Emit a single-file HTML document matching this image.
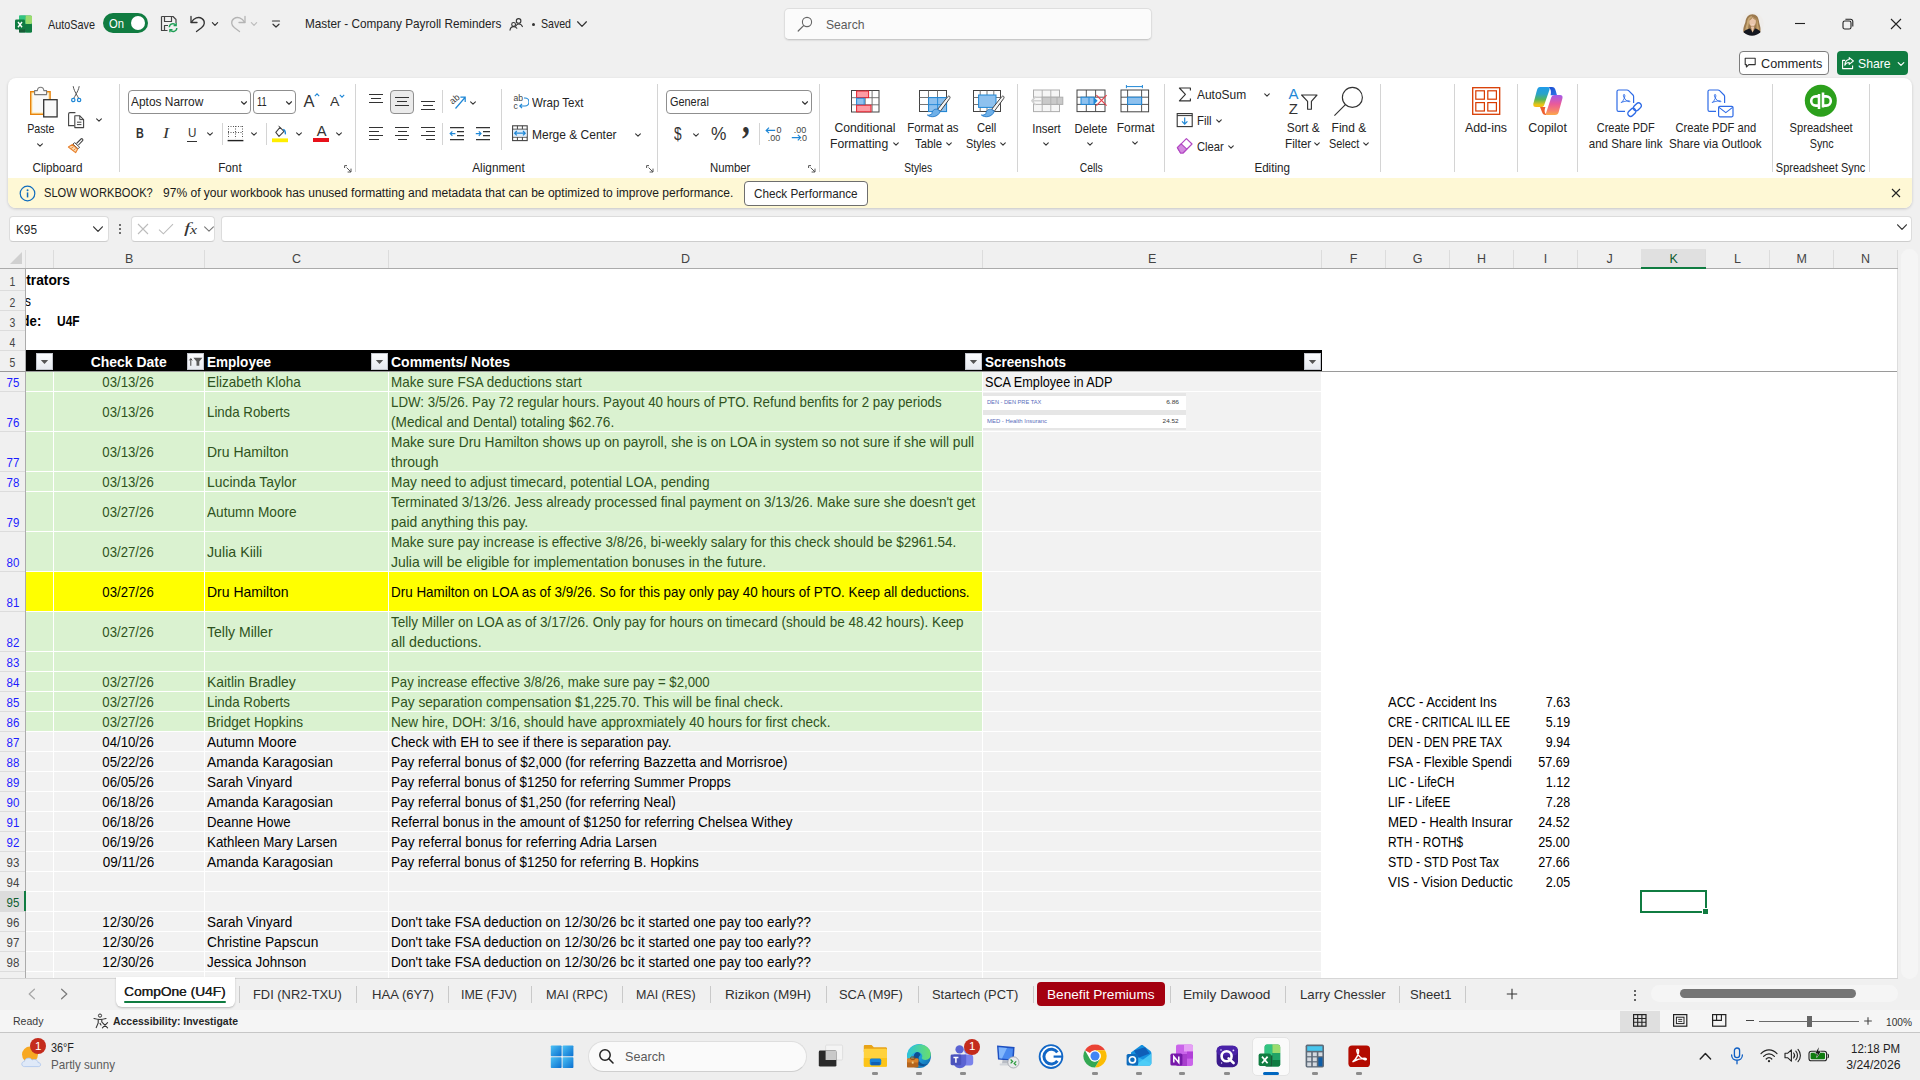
<!DOCTYPE html>
<html><head><meta charset="utf-8"><title>Master - Company Payroll Reminders - Excel</title>
<style>
html,body{margin:0;padding:0;}
body{width:1920px;height:1080px;overflow:hidden;position:relative;background:#f0f0f0;font-family:"Liberation Sans",sans-serif;}
body div,body svg,body span.t{position:absolute;}
span.t{white-space:pre;display:block;}
div{box-sizing:border-box;}
</style></head><body>

<div style="left:0px;top:248px;width:1898px;height:730px;background:#ffffff;"></div>
<div style="left:0px;top:248px;width:1898px;height:20px;background:#f0f0f0;"></div>
<svg style="left:9px;top:251px;" width="14" height="14" viewBox="0 0 14 14"><path d="M13 1 L13 13 L1 13 Z" fill="#d0d0d0"/></svg>
<div style="left:53px;top:250px;width:1px;height:18px;background:#dcdcdc;"></div>
<span class="t" style="left:124.93px;top:251.00px;height:16px;line-height:16px;font-size:12.5px;color:#444;">B</span>
<div style="left:204px;top:250px;width:1px;height:18px;background:#dcdcdc;"></div>
<span class="t" style="left:292.09px;top:251.00px;height:16px;line-height:16px;font-size:12.5px;color:#444;">C</span>
<div style="left:388px;top:250px;width:1px;height:18px;background:#dcdcdc;"></div>
<span class="t" style="left:681.09px;top:251.00px;height:16px;line-height:16px;font-size:12.5px;color:#444;">D</span>
<div style="left:982px;top:250px;width:1px;height:18px;background:#dcdcdc;"></div>
<span class="t" style="left:1147.93px;top:251.00px;height:16px;line-height:16px;font-size:12.5px;color:#444;">E</span>
<div style="left:1321px;top:250px;width:1px;height:18px;background:#dcdcdc;"></div>
<span class="t" style="left:1349.78px;top:251.00px;height:16px;line-height:16px;font-size:12.5px;color:#444;">F</span>
<div style="left:1385px;top:250px;width:1px;height:18px;background:#dcdcdc;"></div>
<span class="t" style="left:1412.74px;top:251.00px;height:16px;line-height:16px;font-size:12.5px;color:#444;">G</span>
<div style="left:1449px;top:250px;width:1px;height:18px;background:#dcdcdc;"></div>
<span class="t" style="left:1477.09px;top:251.00px;height:16px;line-height:16px;font-size:12.5px;color:#444;">H</span>
<div style="left:1513px;top:250px;width:1px;height:18px;background:#dcdcdc;"></div>
<span class="t" style="left:1543.86px;top:251.00px;height:16px;line-height:16px;font-size:12.5px;color:#444;">I</span>
<div style="left:1577px;top:250px;width:1px;height:18px;background:#dcdcdc;"></div>
<span class="t" style="left:1606.47px;top:251.00px;height:16px;line-height:16px;font-size:12.5px;color:#444;">J</span>
<div style="left:1641px;top:250px;width:1px;height:18px;background:#dcdcdc;"></div>
<div style="left:1641px;top:249px;width:65px;height:20px;background:#e0e0e0;border-bottom:2px solid #107c41;"></div>
<span class="t" style="left:1669.43px;top:251.00px;height:16px;line-height:16px;font-size:12.5px;color:#0e5c2f;">K</span>
<div style="left:1705px;top:250px;width:1px;height:18px;background:#dcdcdc;"></div>
<span class="t" style="left:1734.12px;top:251.00px;height:16px;line-height:16px;font-size:12.5px;color:#444;">L</span>
<div style="left:1769px;top:250px;width:1px;height:18px;background:#dcdcdc;"></div>
<span class="t" style="left:1796.39px;top:251.00px;height:16px;line-height:16px;font-size:12.5px;color:#444;">M</span>
<div style="left:1833px;top:250px;width:1px;height:18px;background:#dcdcdc;"></div>
<span class="t" style="left:1861.09px;top:251.00px;height:16px;line-height:16px;font-size:12.5px;color:#444;">N</span>
<div style="left:1897px;top:250px;width:1px;height:18px;background:#dcdcdc;"></div>
<div style="left:25px;top:250px;width:1px;height:18px;background:#dcdcdc;"></div>
<div style="left:0px;top:268px;width:1898px;height:1px;background:#ababab;"></div>
<div style="left:1641px;top:267px;width:65px;height:2px;background:#107c41;"></div>
<div style="left:0px;top:269px;width:25px;height:709px;background:#f0f0f0;"></div>
<div style="left:25px;top:269px;width:1px;height:709px;background:#ababab;"></div>
<span class="t" style="left:9.30px;top:273.70px;height:16px;line-height:16px;font-size:12.6px;color:#444;transform:scaleX(0.8277);transform-origin:50% 50%;">1</span>
<div style="left:0px;top:290px;width:25px;height:1px;background:#dcdcdc;"></div>
<span class="t" style="left:9.30px;top:294.60px;height:16px;line-height:16px;font-size:12.6px;color:#444;transform:scaleX(0.8277);transform-origin:50% 50%;">2</span>
<div style="left:0px;top:310px;width:25px;height:1px;background:#dcdcdc;"></div>
<span class="t" style="left:9.30px;top:314.60px;height:16px;line-height:16px;font-size:12.6px;color:#444;transform:scaleX(0.8277);transform-origin:50% 50%;">3</span>
<div style="left:0px;top:330px;width:25px;height:1px;background:#dcdcdc;"></div>
<span class="t" style="left:9.30px;top:334.60px;height:16px;line-height:16px;font-size:12.6px;color:#444;transform:scaleX(0.8277);transform-origin:50% 50%;">4</span>
<div style="left:0px;top:350px;width:25px;height:1px;background:#dcdcdc;"></div>
<span class="t" style="left:9.30px;top:355.00px;height:16px;line-height:16px;font-size:12.6px;color:#444;transform:scaleX(0.8277);transform-origin:50% 50%;">5</span>
<div style="left:0px;top:371px;width:25px;height:1px;background:#dcdcdc;"></div>
<span class="t" style="left:5.79px;top:375.20px;height:16px;line-height:16px;font-size:12.6px;color:#1c1cff;transform:scaleX(0.9133);transform-origin:50% 50%;">75</span>
<div style="left:0px;top:391px;width:25px;height:1px;background:#dcdcdc;"></div>
<span class="t" style="left:5.79px;top:415.20px;height:16px;line-height:16px;font-size:12.6px;color:#1c1cff;transform:scaleX(0.9133);transform-origin:50% 50%;">76</span>
<div style="left:0px;top:431px;width:25px;height:1px;background:#dcdcdc;"></div>
<span class="t" style="left:5.79px;top:455.20px;height:16px;line-height:16px;font-size:12.6px;color:#1c1cff;transform:scaleX(0.9133);transform-origin:50% 50%;">77</span>
<div style="left:0px;top:471px;width:25px;height:1px;background:#dcdcdc;"></div>
<span class="t" style="left:5.79px;top:475.20px;height:16px;line-height:16px;font-size:12.6px;color:#1c1cff;transform:scaleX(0.9133);transform-origin:50% 50%;">78</span>
<div style="left:0px;top:491px;width:25px;height:1px;background:#dcdcdc;"></div>
<span class="t" style="left:5.79px;top:515.20px;height:16px;line-height:16px;font-size:12.6px;color:#1c1cff;transform:scaleX(0.9133);transform-origin:50% 50%;">79</span>
<div style="left:0px;top:531px;width:25px;height:1px;background:#dcdcdc;"></div>
<span class="t" style="left:5.79px;top:555.20px;height:16px;line-height:16px;font-size:12.6px;color:#1c1cff;transform:scaleX(0.9133);transform-origin:50% 50%;">80</span>
<div style="left:0px;top:571px;width:25px;height:1px;background:#dcdcdc;"></div>
<span class="t" style="left:5.79px;top:595.20px;height:16px;line-height:16px;font-size:12.6px;color:#1c1cff;transform:scaleX(0.9133);transform-origin:50% 50%;">81</span>
<div style="left:0px;top:611px;width:25px;height:1px;background:#dcdcdc;"></div>
<span class="t" style="left:5.79px;top:635.20px;height:16px;line-height:16px;font-size:12.6px;color:#1c1cff;transform:scaleX(0.9133);transform-origin:50% 50%;">82</span>
<div style="left:0px;top:651px;width:25px;height:1px;background:#dcdcdc;"></div>
<span class="t" style="left:5.79px;top:655.20px;height:16px;line-height:16px;font-size:12.6px;color:#1c1cff;transform:scaleX(0.9133);transform-origin:50% 50%;">83</span>
<div style="left:0px;top:671px;width:25px;height:1px;background:#dcdcdc;"></div>
<span class="t" style="left:5.79px;top:675.20px;height:16px;line-height:16px;font-size:12.6px;color:#1c1cff;transform:scaleX(0.9133);transform-origin:50% 50%;">84</span>
<div style="left:0px;top:691px;width:25px;height:1px;background:#dcdcdc;"></div>
<span class="t" style="left:5.79px;top:695.20px;height:16px;line-height:16px;font-size:12.6px;color:#1c1cff;transform:scaleX(0.9133);transform-origin:50% 50%;">85</span>
<div style="left:0px;top:711px;width:25px;height:1px;background:#dcdcdc;"></div>
<span class="t" style="left:5.79px;top:715.20px;height:16px;line-height:16px;font-size:12.6px;color:#1c1cff;transform:scaleX(0.9133);transform-origin:50% 50%;">86</span>
<div style="left:0px;top:731px;width:25px;height:1px;background:#dcdcdc;"></div>
<span class="t" style="left:5.79px;top:735.20px;height:16px;line-height:16px;font-size:12.6px;color:#1c1cff;transform:scaleX(0.9133);transform-origin:50% 50%;">87</span>
<div style="left:0px;top:751px;width:25px;height:1px;background:#dcdcdc;"></div>
<span class="t" style="left:5.79px;top:755.20px;height:16px;line-height:16px;font-size:12.6px;color:#1c1cff;transform:scaleX(0.9133);transform-origin:50% 50%;">88</span>
<div style="left:0px;top:771px;width:25px;height:1px;background:#dcdcdc;"></div>
<span class="t" style="left:5.79px;top:775.20px;height:16px;line-height:16px;font-size:12.6px;color:#1c1cff;transform:scaleX(0.9133);transform-origin:50% 50%;">89</span>
<div style="left:0px;top:791px;width:25px;height:1px;background:#dcdcdc;"></div>
<span class="t" style="left:5.79px;top:795.20px;height:16px;line-height:16px;font-size:12.6px;color:#1c1cff;transform:scaleX(0.9133);transform-origin:50% 50%;">90</span>
<div style="left:0px;top:811px;width:25px;height:1px;background:#dcdcdc;"></div>
<span class="t" style="left:5.79px;top:815.20px;height:16px;line-height:16px;font-size:12.6px;color:#1c1cff;transform:scaleX(0.9133);transform-origin:50% 50%;">91</span>
<div style="left:0px;top:831px;width:25px;height:1px;background:#dcdcdc;"></div>
<span class="t" style="left:5.79px;top:835.20px;height:16px;line-height:16px;font-size:12.6px;color:#1c1cff;transform:scaleX(0.9133);transform-origin:50% 50%;">92</span>
<div style="left:0px;top:851px;width:25px;height:1px;background:#dcdcdc;"></div>
<span class="t" style="left:5.79px;top:855.20px;height:16px;line-height:16px;font-size:12.6px;color:#444;transform:scaleX(0.9133);transform-origin:50% 50%;">93</span>
<div style="left:0px;top:871px;width:25px;height:1px;background:#dcdcdc;"></div>
<span class="t" style="left:5.79px;top:875.20px;height:16px;line-height:16px;font-size:12.6px;color:#444;transform:scaleX(0.9133);transform-origin:50% 50%;">94</span>
<div style="left:0px;top:891px;width:25px;height:1px;background:#dcdcdc;"></div>
<div style="left:0px;top:891px;width:26px;height:20px;background:#dcdcdc;border-right:2px solid #107c41;"></div>
<span class="t" style="left:5.79px;top:895.20px;height:16px;line-height:16px;font-size:12.6px;color:#0e5c2f;transform:scaleX(0.9133);transform-origin:50% 50%;">95</span>
<div style="left:0px;top:911px;width:25px;height:1px;background:#dcdcdc;"></div>
<span class="t" style="left:5.79px;top:915.20px;height:16px;line-height:16px;font-size:12.6px;color:#444;transform:scaleX(0.9133);transform-origin:50% 50%;">96</span>
<div style="left:0px;top:931px;width:25px;height:1px;background:#dcdcdc;"></div>
<span class="t" style="left:5.79px;top:935.20px;height:16px;line-height:16px;font-size:12.6px;color:#444;transform:scaleX(0.9133);transform-origin:50% 50%;">97</span>
<div style="left:0px;top:951px;width:25px;height:1px;background:#dcdcdc;"></div>
<span class="t" style="left:5.79px;top:955.20px;height:16px;line-height:16px;font-size:12.6px;color:#444;transform:scaleX(0.9133);transform-origin:50% 50%;">98</span>
<div style="left:0px;top:971px;width:25px;height:1px;background:#dcdcdc;"></div>
<div style="left:26px;top:371px;width:956px;height:20px;background:#daf2d0;"></div>
<div style="left:982px;top:371px;width:339px;height:20px;background:#f2f2f2;"></div>
<div style="left:26px;top:391px;width:956px;height:40px;background:#daf2d0;"></div>
<div style="left:982px;top:391px;width:339px;height:40px;background:#f2f2f2;"></div>
<div style="left:26px;top:431px;width:956px;height:40px;background:#daf2d0;"></div>
<div style="left:982px;top:431px;width:339px;height:40px;background:#f2f2f2;"></div>
<div style="left:26px;top:471px;width:956px;height:20px;background:#daf2d0;"></div>
<div style="left:982px;top:471px;width:339px;height:20px;background:#f2f2f2;"></div>
<div style="left:26px;top:491px;width:956px;height:40px;background:#daf2d0;"></div>
<div style="left:982px;top:491px;width:339px;height:40px;background:#f2f2f2;"></div>
<div style="left:26px;top:531px;width:956px;height:40px;background:#daf2d0;"></div>
<div style="left:982px;top:531px;width:339px;height:40px;background:#f2f2f2;"></div>
<div style="left:26px;top:571px;width:956px;height:40px;background:#ffff00;"></div>
<div style="left:982px;top:571px;width:339px;height:40px;background:#f2f2f2;"></div>
<div style="left:26px;top:611px;width:956px;height:40px;background:#daf2d0;"></div>
<div style="left:982px;top:611px;width:339px;height:40px;background:#f2f2f2;"></div>
<div style="left:26px;top:651px;width:956px;height:20px;background:#daf2d0;"></div>
<div style="left:982px;top:651px;width:339px;height:20px;background:#f2f2f2;"></div>
<div style="left:26px;top:671px;width:956px;height:20px;background:#daf2d0;"></div>
<div style="left:982px;top:671px;width:339px;height:20px;background:#f2f2f2;"></div>
<div style="left:26px;top:691px;width:956px;height:20px;background:#daf2d0;"></div>
<div style="left:982px;top:691px;width:339px;height:20px;background:#f2f2f2;"></div>
<div style="left:26px;top:711px;width:956px;height:20px;background:#daf2d0;"></div>
<div style="left:982px;top:711px;width:339px;height:20px;background:#f2f2f2;"></div>
<div style="left:26px;top:731px;width:956px;height:20px;background:#f2f2f2;"></div>
<div style="left:982px;top:731px;width:339px;height:20px;background:#f2f2f2;"></div>
<div style="left:26px;top:751px;width:956px;height:20px;background:#f2f2f2;"></div>
<div style="left:982px;top:751px;width:339px;height:20px;background:#f2f2f2;"></div>
<div style="left:26px;top:771px;width:956px;height:20px;background:#f2f2f2;"></div>
<div style="left:982px;top:771px;width:339px;height:20px;background:#f2f2f2;"></div>
<div style="left:26px;top:791px;width:956px;height:20px;background:#f2f2f2;"></div>
<div style="left:982px;top:791px;width:339px;height:20px;background:#f2f2f2;"></div>
<div style="left:26px;top:811px;width:956px;height:20px;background:#f2f2f2;"></div>
<div style="left:982px;top:811px;width:339px;height:20px;background:#f2f2f2;"></div>
<div style="left:26px;top:831px;width:956px;height:20px;background:#f2f2f2;"></div>
<div style="left:982px;top:831px;width:339px;height:20px;background:#f2f2f2;"></div>
<div style="left:26px;top:851px;width:956px;height:20px;background:#f2f2f2;"></div>
<div style="left:982px;top:851px;width:339px;height:20px;background:#f2f2f2;"></div>
<div style="left:26px;top:871px;width:956px;height:20px;background:#f2f2f2;"></div>
<div style="left:982px;top:871px;width:339px;height:20px;background:#f2f2f2;"></div>
<div style="left:26px;top:891px;width:956px;height:20px;background:#f2f2f2;"></div>
<div style="left:982px;top:891px;width:339px;height:20px;background:#f2f2f2;"></div>
<div style="left:26px;top:911px;width:956px;height:20px;background:#f2f2f2;"></div>
<div style="left:982px;top:911px;width:339px;height:20px;background:#f2f2f2;"></div>
<div style="left:26px;top:931px;width:956px;height:20px;background:#f2f2f2;"></div>
<div style="left:982px;top:931px;width:339px;height:20px;background:#f2f2f2;"></div>
<div style="left:26px;top:951px;width:956px;height:20px;background:#f2f2f2;"></div>
<div style="left:982px;top:951px;width:339px;height:20px;background:#f2f2f2;"></div>
<div style="left:26px;top:971px;width:1295px;height:7px;background:#f2f2f2;"></div>
<div style="left:26px;top:391px;width:1295px;height:1px;background:#ffffff;"></div>
<div style="left:26px;top:431px;width:1295px;height:1px;background:#ffffff;"></div>
<div style="left:26px;top:471px;width:1295px;height:1px;background:#ffffff;"></div>
<div style="left:26px;top:491px;width:1295px;height:1px;background:#ffffff;"></div>
<div style="left:26px;top:531px;width:1295px;height:1px;background:#ffffff;"></div>
<div style="left:26px;top:571px;width:1295px;height:1px;background:#ffffff;"></div>
<div style="left:26px;top:611px;width:1295px;height:1px;background:#ffffff;"></div>
<div style="left:26px;top:651px;width:1295px;height:1px;background:#ffffff;"></div>
<div style="left:26px;top:671px;width:1295px;height:1px;background:#ffffff;"></div>
<div style="left:26px;top:691px;width:1295px;height:1px;background:#ffffff;"></div>
<div style="left:26px;top:711px;width:1295px;height:1px;background:#ffffff;"></div>
<div style="left:26px;top:731px;width:1295px;height:1px;background:#ffffff;"></div>
<div style="left:26px;top:751px;width:1295px;height:1px;background:#ffffff;"></div>
<div style="left:26px;top:771px;width:1295px;height:1px;background:#ffffff;"></div>
<div style="left:26px;top:791px;width:1295px;height:1px;background:#ffffff;"></div>
<div style="left:26px;top:811px;width:1295px;height:1px;background:#ffffff;"></div>
<div style="left:26px;top:831px;width:1295px;height:1px;background:#ffffff;"></div>
<div style="left:26px;top:851px;width:1295px;height:1px;background:#ffffff;"></div>
<div style="left:26px;top:871px;width:1295px;height:1px;background:#ffffff;"></div>
<div style="left:26px;top:891px;width:1295px;height:1px;background:#ffffff;"></div>
<div style="left:26px;top:911px;width:1295px;height:1px;background:#ffffff;"></div>
<div style="left:26px;top:931px;width:1295px;height:1px;background:#ffffff;"></div>
<div style="left:26px;top:951px;width:1295px;height:1px;background:#ffffff;"></div>
<div style="left:26px;top:971px;width:1295px;height:1px;background:#ffffff;"></div>
<div style="left:53px;top:371px;width:1px;height:607px;background:#ffffff;"></div>
<div style="left:204px;top:371px;width:1px;height:607px;background:#ffffff;"></div>
<div style="left:388px;top:371px;width:1px;height:607px;background:#ffffff;"></div>
<div style="left:982px;top:371px;width:1px;height:607px;background:#ffffff;"></div>
<div style="left:1321px;top:371px;width:1px;height:607px;background:#ffffff;"></div>
<div style="left:26px;top:350px;width:1296px;height:21px;background:#000000;"></div>
<div style="left:0px;top:371px;width:1898px;height:1px;background:#9a9a9a;"></div>
<svg style="left:36px;top:353px;" width="17" height="17" viewBox="0 0 17 17"><defs><linearGradient id="fb36" x1="0" y1="0" x2="0" y2="1"><stop offset="0" stop-color="#fbfcfe"/><stop offset="1" stop-color="#e6e9ef"/></linearGradient></defs><rect x="0.5" y="0.5" width="16" height="16" fill="url(#fb36)" stroke="#c2c5cc"/><path d="M4.8 7 L12.2 7 L8.5 11 Z" fill="#555"/></svg>
<svg style="left:187px;top:353px;" width="17" height="17" viewBox="0 0 17 17"><defs><linearGradient id="fb187" x1="0" y1="0" x2="0" y2="1"><stop offset="0" stop-color="#fbfcfe"/><stop offset="1" stop-color="#e6e9ef"/></linearGradient></defs><rect x="0.5" y="0.5" width="16" height="16" fill="url(#fb187)" stroke="#c2c5cc"/><path d="M6.4 4.8 L15.4 4.8 L12.3 8.6 L12.3 12.8 L9.5 12.8 L9.5 8.6 Z" fill="#5a5a5a"/><path d="M3.8 12.8 L3.8 5.8 M2.4 7.4 L3.8 5.6 L5.2 7.4" stroke="#444" stroke-width="1" fill="none"/></svg>
<svg style="left:371px;top:353px;" width="17" height="17" viewBox="0 0 17 17"><defs><linearGradient id="fb371" x1="0" y1="0" x2="0" y2="1"><stop offset="0" stop-color="#fbfcfe"/><stop offset="1" stop-color="#e6e9ef"/></linearGradient></defs><rect x="0.5" y="0.5" width="16" height="16" fill="url(#fb371)" stroke="#c2c5cc"/><path d="M4.8 7 L12.2 7 L8.5 11 Z" fill="#555"/></svg>
<svg style="left:965px;top:353px;" width="17" height="17" viewBox="0 0 17 17"><defs><linearGradient id="fb965" x1="0" y1="0" x2="0" y2="1"><stop offset="0" stop-color="#fbfcfe"/><stop offset="1" stop-color="#e6e9ef"/></linearGradient></defs><rect x="0.5" y="0.5" width="16" height="16" fill="url(#fb965)" stroke="#c2c5cc"/><path d="M4.8 7 L12.2 7 L8.5 11 Z" fill="#555"/></svg>
<svg style="left:1304px;top:353px;" width="17" height="17" viewBox="0 0 17 17"><defs><linearGradient id="fb1304" x1="0" y1="0" x2="0" y2="1"><stop offset="0" stop-color="#fbfcfe"/><stop offset="1" stop-color="#e6e9ef"/></linearGradient></defs><rect x="0.5" y="0.5" width="16" height="16" fill="url(#fb1304)" stroke="#c2c5cc"/><path d="M4.8 7 L12.2 7 L8.5 11 Z" fill="#555"/></svg>
<div style="left:26px;top:269px;width:300px;height:81px;overflow:hidden;">
<span class="t" style="left:-8.78px;top:2.20px;height:18px;line-height:18px;font-size:14.2px;color:#000;font-weight:bold;transform:scaleX(0.9693);transform-origin:100% 50%;">strators</span>
<span class="t" style="left:-2.25px;top:23.00px;height:18px;line-height:18px;font-size:13.9px;color:#000;transform:scaleX(0.8921);transform-origin:100% 50%;">s</span>
<span class="t" style="left:-6.30px;top:43.20px;height:18px;line-height:18px;font-size:14.2px;color:#000;font-weight:bold;transform:scaleX(0.9266);transform-origin:100% 50%;">de:</span>
<span class="t" style="left:30.70px;top:43.20px;height:18px;line-height:18px;font-size:14.2px;color:#000;font-weight:bold;transform:scaleX(0.8424);transform-origin:0 50%;">U4F</span>
</div>
<span class="t" style="left:89.24px;top:352.50px;height:19px;line-height:19px;font-size:14.6px;color:#fff;font-weight:bold;transform:scaleX(0.9557);transform-origin:50% 50%;">Check Date</span>
<span class="t" style="left:207.00px;top:352.50px;height:19px;line-height:19px;font-size:14.6px;color:#fff;font-weight:bold;transform:scaleX(0.9279);transform-origin:0 50%;">Employee</span>
<span class="t" style="left:391.00px;top:352.50px;height:19px;line-height:19px;font-size:14.6px;color:#fff;font-weight:bold;transform:scaleX(0.9587);transform-origin:0 50%;">Comments/ Notes</span>
<span class="t" style="left:985.00px;top:352.50px;height:19px;line-height:19px;font-size:14.6px;color:#fff;font-weight:bold;transform:scaleX(0.9242);transform-origin:0 50%;">Screenshots</span>
<span class="t" style="left:101.45px;top:373.20px;height:18px;line-height:18px;font-size:13.9px;color:#2f5320;transform:scaleX(0.9500);transform-origin:50% 50%;">03/13/26</span>
<span class="t" style="left:207.00px;top:373.20px;height:18px;line-height:18px;font-size:13.9px;color:#2f5320;transform:scaleX(0.9721);transform-origin:0 50%;">Elizabeth Kloha</span>
<span class="t" style="left:391.00px;top:373.20px;height:18px;line-height:18px;font-size:13.9px;color:#2f5320;transform:scaleX(0.9685);transform-origin:0 50%;">Make sure FSA deductions start</span>
<span class="t" style="left:101.45px;top:403.20px;height:18px;line-height:18px;font-size:13.9px;color:#2f5320;transform:scaleX(0.9500);transform-origin:50% 50%;">03/13/26</span>
<span class="t" style="left:207.00px;top:403.20px;height:18px;line-height:18px;font-size:13.9px;color:#2f5320;transform:scaleX(0.9590);transform-origin:0 50%;">Linda Roberts</span>
<span class="t" style="left:391.00px;top:393.00px;height:18px;line-height:18px;font-size:13.9px;color:#2f5320;transform:scaleX(0.9580);transform-origin:0 50%;">LDW: 3/5/26. Pay 72 regular hours. Payout 40 hours of PTO. Refund benfits for 2 pay periods</span>
<span class="t" style="left:391.00px;top:413.00px;height:18px;line-height:18px;font-size:13.9px;color:#2f5320;transform:scaleX(0.9834);transform-origin:0 50%;">(Medical and Dental) totaling $62.76.</span>
<span class="t" style="left:101.45px;top:443.20px;height:18px;line-height:18px;font-size:13.9px;color:#2f5320;transform:scaleX(0.9500);transform-origin:50% 50%;">03/13/26</span>
<span class="t" style="left:207.00px;top:443.20px;height:18px;line-height:18px;font-size:13.9px;color:#2f5320;transform:scaleX(1.0073);transform-origin:0 50%;">Dru Hamilton</span>
<span class="t" style="left:391.00px;top:433.00px;height:18px;line-height:18px;font-size:13.9px;color:#2f5320;transform:scaleX(0.9860);transform-origin:0 50%;">Make sure Dru Hamilton shows up on payroll, she is on LOA in system so not sure if she will pull</span>
<span class="t" style="left:391.00px;top:453.00px;height:18px;line-height:18px;font-size:13.9px;color:#2f5320;transform:scaleX(1.0075);transform-origin:0 50%;">through</span>
<span class="t" style="left:101.45px;top:473.20px;height:18px;line-height:18px;font-size:13.9px;color:#2f5320;transform:scaleX(0.9500);transform-origin:50% 50%;">03/13/26</span>
<span class="t" style="left:207.00px;top:473.20px;height:18px;line-height:18px;font-size:13.9px;color:#2f5320;">Lucinda Taylor</span>
<span class="t" style="left:391.00px;top:473.20px;height:18px;line-height:18px;font-size:13.9px;color:#2f5320;transform:scaleX(0.9844);transform-origin:0 50%;">May need to adjust timecard, potential LOA, pending</span>
<span class="t" style="left:101.45px;top:503.20px;height:18px;line-height:18px;font-size:13.9px;color:#2f5320;transform:scaleX(0.9500);transform-origin:50% 50%;">03/27/26</span>
<span class="t" style="left:207.00px;top:503.20px;height:18px;line-height:18px;font-size:13.9px;color:#2f5320;transform:scaleX(0.9839);transform-origin:0 50%;">Autumn Moore</span>
<span class="t" style="left:391.00px;top:493.00px;height:18px;line-height:18px;font-size:13.9px;color:#2f5320;transform:scaleX(0.9760);transform-origin:0 50%;">Terminated 3/13/26. Jess already processed final payment on 3/13/26. Make sure she doesn&#x27;t get</span>
<span class="t" style="left:391.00px;top:513.00px;height:18px;line-height:18px;font-size:13.9px;color:#2f5320;">paid anything this pay.</span>
<span class="t" style="left:101.45px;top:543.20px;height:18px;line-height:18px;font-size:13.9px;color:#2f5320;transform:scaleX(0.9500);transform-origin:50% 50%;">03/27/26</span>
<span class="t" style="left:207.00px;top:543.20px;height:18px;line-height:18px;font-size:13.9px;color:#2f5320;transform:scaleX(1.0226);transform-origin:0 50%;">Julia Kiili</span>
<span class="t" style="left:391.00px;top:533.00px;height:18px;line-height:18px;font-size:13.9px;color:#2f5320;transform:scaleX(0.9727);transform-origin:0 50%;">Make sure pay increase is effective 3/8/26, bi-weekly salary for this check should be $2961.54.</span>
<span class="t" style="left:391.00px;top:553.00px;height:18px;line-height:18px;font-size:13.9px;color:#2f5320;transform:scaleX(1.0041);transform-origin:0 50%;">Julia will be eligible for implementation bonuses in the future.</span>
<span class="t" style="left:101.45px;top:583.20px;height:18px;line-height:18px;font-size:13.9px;color:#000;transform:scaleX(0.9500);transform-origin:50% 50%;">03/27/26</span>
<span class="t" style="left:207.00px;top:583.20px;height:18px;line-height:18px;font-size:13.9px;color:#000;transform:scaleX(1.0073);transform-origin:0 50%;">Dru Hamilton</span>
<span class="t" style="left:391.00px;top:583.20px;height:18px;line-height:18px;font-size:13.9px;color:#000;transform:scaleX(0.9673);transform-origin:0 50%;">Dru Hamilton on LOA as of 3/9/26. So for this pay only pay 40 hours of PTO. Keep all deductions.</span>
<span class="t" style="left:101.45px;top:623.20px;height:18px;line-height:18px;font-size:13.9px;color:#2f5320;transform:scaleX(0.9500);transform-origin:50% 50%;">03/27/26</span>
<span class="t" style="left:207.00px;top:623.20px;height:18px;line-height:18px;font-size:13.9px;color:#2f5320;transform:scaleX(1.0112);transform-origin:0 50%;">Telly Miller</span>
<span class="t" style="left:391.00px;top:613.00px;height:18px;line-height:18px;font-size:13.9px;color:#2f5320;transform:scaleX(0.9745);transform-origin:0 50%;">Telly Miller on LOA as of 3/17/26. Only pay for hours on timecard (should be 48.42 hours). Keep</span>
<span class="t" style="left:391.00px;top:633.00px;height:18px;line-height:18px;font-size:13.9px;color:#2f5320;transform:scaleX(1.0206);transform-origin:0 50%;">all deductions.</span>
<span class="t" style="left:101.45px;top:673.20px;height:18px;line-height:18px;font-size:13.9px;color:#2f5320;transform:scaleX(0.9500);transform-origin:50% 50%;">03/27/26</span>
<span class="t" style="left:207.00px;top:673.20px;height:18px;line-height:18px;font-size:13.9px;color:#2f5320;">Kaitlin Bradley</span>
<span class="t" style="left:391.00px;top:673.20px;height:18px;line-height:18px;font-size:13.9px;color:#2f5320;transform:scaleX(0.9506);transform-origin:0 50%;">Pay increase effective 3/8/26, make sure pay = $2,000</span>
<span class="t" style="left:101.45px;top:693.20px;height:18px;line-height:18px;font-size:13.9px;color:#2f5320;transform:scaleX(0.9500);transform-origin:50% 50%;">03/27/26</span>
<span class="t" style="left:207.00px;top:693.20px;height:18px;line-height:18px;font-size:13.9px;color:#2f5320;transform:scaleX(0.9590);transform-origin:0 50%;">Linda Roberts</span>
<span class="t" style="left:391.00px;top:693.20px;height:18px;line-height:18px;font-size:13.9px;color:#2f5320;transform:scaleX(0.9851);transform-origin:0 50%;">Pay separation compensation $1,225.70. This will be final check.</span>
<span class="t" style="left:101.45px;top:713.20px;height:18px;line-height:18px;font-size:13.9px;color:#2f5320;transform:scaleX(0.9500);transform-origin:50% 50%;">03/27/26</span>
<span class="t" style="left:207.00px;top:713.20px;height:18px;line-height:18px;font-size:13.9px;color:#2f5320;transform:scaleX(0.9794);transform-origin:0 50%;">Bridget Hopkins</span>
<span class="t" style="left:391.00px;top:713.20px;height:18px;line-height:18px;font-size:13.9px;color:#2f5320;transform:scaleX(0.9779);transform-origin:0 50%;">New hire, DOH: 3/16, should have approxmiately 40 hours for first check.</span>
<span class="t" style="left:101.45px;top:733.20px;height:18px;line-height:18px;font-size:13.9px;color:#000;transform:scaleX(0.9500);transform-origin:50% 50%;">04/10/26</span>
<span class="t" style="left:207.00px;top:733.20px;height:18px;line-height:18px;font-size:13.9px;color:#000;transform:scaleX(0.9839);transform-origin:0 50%;">Autumn Moore</span>
<span class="t" style="left:391.00px;top:733.20px;height:18px;line-height:18px;font-size:13.9px;color:#000;transform:scaleX(0.9642);transform-origin:0 50%;">Check with EH to see if there is separation pay.</span>
<span class="t" style="left:101.45px;top:753.20px;height:18px;line-height:18px;font-size:13.9px;color:#000;transform:scaleX(0.9500);transform-origin:50% 50%;">05/22/26</span>
<span class="t" style="left:207.00px;top:753.20px;height:18px;line-height:18px;font-size:13.9px;color:#000;">Amanda Karagosian</span>
<span class="t" style="left:391.00px;top:753.20px;height:18px;line-height:18px;font-size:13.9px;color:#000;transform:scaleX(0.9729);transform-origin:0 50%;">Pay referral bonus of $2,000 (for referring Bazzetta and Morrisroe)</span>
<span class="t" style="left:101.45px;top:773.20px;height:18px;line-height:18px;font-size:13.9px;color:#000;transform:scaleX(0.9500);transform-origin:50% 50%;">06/05/26</span>
<span class="t" style="left:207.00px;top:773.20px;height:18px;line-height:18px;font-size:13.9px;color:#000;transform:scaleX(0.9711);transform-origin:0 50%;">Sarah Vinyard</span>
<span class="t" style="left:391.00px;top:773.20px;height:18px;line-height:18px;font-size:13.9px;color:#000;transform:scaleX(0.9672);transform-origin:0 50%;">Pay referral bonus of $1250 for referring Summer Propps</span>
<span class="t" style="left:101.45px;top:793.20px;height:18px;line-height:18px;font-size:13.9px;color:#000;transform:scaleX(0.9500);transform-origin:50% 50%;">06/18/26</span>
<span class="t" style="left:207.00px;top:793.20px;height:18px;line-height:18px;font-size:13.9px;color:#000;">Amanda Karagosian</span>
<span class="t" style="left:391.00px;top:793.20px;height:18px;line-height:18px;font-size:13.9px;color:#000;transform:scaleX(0.9733);transform-origin:0 50%;">Pay referral bonus of $1,250 (for referring Neal)</span>
<span class="t" style="left:101.45px;top:813.20px;height:18px;line-height:18px;font-size:13.9px;color:#000;transform:scaleX(0.9500);transform-origin:50% 50%;">06/18/26</span>
<span class="t" style="left:207.00px;top:813.20px;height:18px;line-height:18px;font-size:13.9px;color:#000;transform:scaleX(0.9490);transform-origin:0 50%;">Deanne Howe</span>
<span class="t" style="left:391.00px;top:813.20px;height:18px;line-height:18px;font-size:13.9px;color:#000;transform:scaleX(0.9699);transform-origin:0 50%;">Referral bonus in the amount of $1250 for referring Chelsea Withey</span>
<span class="t" style="left:101.45px;top:833.20px;height:18px;line-height:18px;font-size:13.9px;color:#000;transform:scaleX(0.9500);transform-origin:50% 50%;">06/19/26</span>
<span class="t" style="left:207.00px;top:833.20px;height:18px;line-height:18px;font-size:13.9px;color:#000;transform:scaleX(0.9582);transform-origin:0 50%;">Kathleen Mary Larsen</span>
<span class="t" style="left:391.00px;top:833.20px;height:18px;line-height:18px;font-size:13.9px;color:#000;transform:scaleX(0.9812);transform-origin:0 50%;">Pay referral bonus for referring Adria Larsen</span>
<span class="t" style="left:101.96px;top:853.20px;height:18px;line-height:18px;font-size:13.9px;color:#000;transform:scaleX(0.9684);transform-origin:50% 50%;">09/11/26</span>
<span class="t" style="left:207.00px;top:853.20px;height:18px;line-height:18px;font-size:13.9px;color:#000;">Amanda Karagosian</span>
<span class="t" style="left:391.00px;top:853.20px;height:18px;line-height:18px;font-size:13.9px;color:#000;transform:scaleX(0.9675);transform-origin:0 50%;">Pay referral bonus of $1250 for referring B. Hopkins</span>
<span class="t" style="left:101.45px;top:913.20px;height:18px;line-height:18px;font-size:13.9px;color:#000;transform:scaleX(0.9500);transform-origin:50% 50%;">12/30/26</span>
<span class="t" style="left:207.00px;top:913.20px;height:18px;line-height:18px;font-size:13.9px;color:#000;transform:scaleX(0.9711);transform-origin:0 50%;">Sarah Vinyard</span>
<span class="t" style="left:391.00px;top:913.20px;height:18px;line-height:18px;font-size:13.9px;color:#000;transform:scaleX(0.9653);transform-origin:0 50%;">Don&#x27;t take FSA deduction on 12/30/26 bc it started one pay too early??</span>
<span class="t" style="left:101.45px;top:933.20px;height:18px;line-height:18px;font-size:13.9px;color:#000;transform:scaleX(0.9500);transform-origin:50% 50%;">12/30/26</span>
<span class="t" style="left:207.00px;top:933.20px;height:18px;line-height:18px;font-size:13.9px;color:#000;transform:scaleX(0.9875);transform-origin:0 50%;">Christine Papscun</span>
<span class="t" style="left:391.00px;top:933.20px;height:18px;line-height:18px;font-size:13.9px;color:#000;transform:scaleX(0.9653);transform-origin:0 50%;">Don&#x27;t take FSA deduction on 12/30/26 bc it started one pay too early??</span>
<span class="t" style="left:101.45px;top:953.20px;height:18px;line-height:18px;font-size:13.9px;color:#000;transform:scaleX(0.9500);transform-origin:50% 50%;">12/30/26</span>
<span class="t" style="left:207.00px;top:953.20px;height:18px;line-height:18px;font-size:13.9px;color:#000;transform:scaleX(0.9673);transform-origin:0 50%;">Jessica Johnson</span>
<span class="t" style="left:391.00px;top:953.20px;height:18px;line-height:18px;font-size:13.9px;color:#000;transform:scaleX(0.9653);transform-origin:0 50%;">Don&#x27;t take FSA deduction on 12/30/26 bc it started one pay too early??</span>
<span class="t" style="left:985.00px;top:373.20px;height:18px;line-height:18px;font-size:13.9px;color:#000;transform:scaleX(0.9117);transform-origin:0 50%;">SCA Employee in ADP</span>
<div style="left:983px;top:393px;width:203px;height:37.3px;background:#e6e6e6;"></div>
<div style="left:983px;top:395.6px;width:203px;height:14.1px;background:#ffffff;"></div>
<div style="left:983px;top:415.3px;width:203px;height:13.1px;background:#ffffff;"></div>
<span class="t" style="left:986.60px;top:398.20px;height:8px;line-height:8px;font-size:6.2px;color:#5a6dbb;transform:scaleX(0.9163);transform-origin:0 50%;">DEN - DEN PRE TAX</span>
<span class="t" style="left:1166.83px;top:398.20px;height:8px;line-height:8px;font-size:6.2px;color:#3a3a3a;transform:scaleX(1.0690);transform-origin:100% 50%;">6.86</span>
<span class="t" style="left:986.60px;top:417.30px;height:8px;line-height:8px;font-size:6.2px;color:#5a6dbb;transform:scaleX(0.9599);transform-origin:0 50%;">MED - Health Insuranc</span>
<span class="t" style="left:1163.38px;top:417.30px;height:8px;line-height:8px;font-size:6.2px;color:#3a3a3a;transform:scaleX(1.0248);transform-origin:100% 50%;">24.52</span>
<span class="t" style="left:1388.00px;top:693.30px;height:18px;line-height:18px;font-size:13.9px;color:#000;transform:scaleX(0.9335);transform-origin:0 50%;">ACC - Accident Ins</span>
<span class="t" style="left:1542.95px;top:693.30px;height:18px;line-height:18px;font-size:13.9px;color:#000;transform:scaleX(0.8945);transform-origin:100% 50%;">7.63</span>
<span class="t" style="left:1388.00px;top:713.30px;height:18px;line-height:18px;font-size:13.9px;color:#000;transform:scaleX(0.8169);transform-origin:0 50%;">CRE - CRITICAL ILL EE</span>
<span class="t" style="left:1542.95px;top:713.30px;height:18px;line-height:18px;font-size:13.9px;color:#000;transform:scaleX(0.8945);transform-origin:100% 50%;">5.19</span>
<span class="t" style="left:1388.00px;top:733.30px;height:18px;line-height:18px;font-size:13.9px;color:#000;transform:scaleX(0.8580);transform-origin:0 50%;">DEN - DEN PRE TAX</span>
<span class="t" style="left:1542.95px;top:733.30px;height:18px;line-height:18px;font-size:13.9px;color:#000;transform:scaleX(0.8945);transform-origin:100% 50%;">9.94</span>
<span class="t" style="left:1388.00px;top:753.30px;height:18px;line-height:18px;font-size:13.9px;color:#000;transform:scaleX(0.9277);transform-origin:0 50%;">FSA - Flexible Spendi</span>
<span class="t" style="left:1535.22px;top:753.30px;height:18px;line-height:18px;font-size:13.9px;color:#000;transform:scaleX(0.9084);transform-origin:100% 50%;">57.69</span>
<span class="t" style="left:1388.00px;top:773.30px;height:18px;line-height:18px;font-size:13.9px;color:#000;transform:scaleX(0.8683);transform-origin:0 50%;">LIC - LifeCH</span>
<span class="t" style="left:1542.95px;top:773.30px;height:18px;line-height:18px;font-size:13.9px;color:#000;transform:scaleX(0.8945);transform-origin:100% 50%;">1.12</span>
<span class="t" style="left:1388.00px;top:793.30px;height:18px;line-height:18px;font-size:13.9px;color:#000;transform:scaleX(0.8502);transform-origin:0 50%;">LIF - LifeEE</span>
<span class="t" style="left:1542.95px;top:793.30px;height:18px;line-height:18px;font-size:13.9px;color:#000;transform:scaleX(0.8945);transform-origin:100% 50%;">7.28</span>
<span class="t" style="left:1388.00px;top:813.30px;height:18px;line-height:18px;font-size:13.9px;color:#000;transform:scaleX(0.9552);transform-origin:0 50%;">MED - Health Insurar</span>
<span class="t" style="left:1535.22px;top:813.30px;height:18px;line-height:18px;font-size:13.9px;color:#000;transform:scaleX(0.9084);transform-origin:100% 50%;">24.52</span>
<span class="t" style="left:1388.00px;top:833.30px;height:18px;line-height:18px;font-size:13.9px;color:#000;transform:scaleX(0.8578);transform-origin:0 50%;">RTH - ROTH$</span>
<span class="t" style="left:1535.22px;top:833.30px;height:18px;line-height:18px;font-size:13.9px;color:#000;transform:scaleX(0.9084);transform-origin:100% 50%;">25.00</span>
<span class="t" style="left:1388.00px;top:853.30px;height:18px;line-height:18px;font-size:13.9px;color:#000;transform:scaleX(0.8881);transform-origin:0 50%;">STD - STD Post Tax</span>
<span class="t" style="left:1535.22px;top:853.30px;height:18px;line-height:18px;font-size:13.9px;color:#000;transform:scaleX(0.9084);transform-origin:100% 50%;">27.66</span>
<span class="t" style="left:1388.00px;top:873.30px;height:18px;line-height:18px;font-size:13.9px;color:#000;transform:scaleX(0.9585);transform-origin:0 50%;">VIS - Vision Deductic</span>
<span class="t" style="left:1542.95px;top:873.30px;height:18px;line-height:18px;font-size:13.9px;color:#000;transform:scaleX(0.8945);transform-origin:100% 50%;">2.05</span>
<div style="left:1640px;top:890px;width:67px;height:23px;border:2px solid #107c41;"></div>
<div style="left:1702px;top:908px;width:6px;height:6px;background:#107c41;border:1px solid #fff;border-right:none;border-bottom:none;"></div>
<div style="left:1897px;top:269px;width:1px;height:709px;background:#dddddd;"></div>
<div style="left:1898px;top:248px;width:22px;height:730px;background:#f0f0f0;"></div>
<svg style="left:15px;top:15px;" width="18" height="18" viewBox="0 0 18 18"><rect x="4" y="0.5" width="13" height="17" rx="1.6" fill="#21a366"/><rect x="4" y="0.5" width="6.5" height="8.5" fill="#33c481"/><rect x="10.5" y="0.5" width="6.5" height="8.5" rx="1.2" fill="#9bdc6e"/><rect x="10.5" y="9" width="6.5" height="8.5" rx="1.2" fill="#107c41"/><rect x="4" y="9" width="6.5" height="8.5" fill="#185c37"/><rect x="0" y="4.5" width="10" height="10" rx="1.2" fill="#107c41"/><path d="M3 7 L7 12.2 M7 7 L3 12.2" stroke="#fff" stroke-width="1.4"/></svg>
<span class="t" style="left:48.20px;top:16.50px;height:16px;line-height:16px;font-size:12.2px;color:#242424;transform:scaleX(0.8884);transform-origin:0 50%;">AutoSave</span>
<div style="left:103px;top:13px;width:45px;height:20px;background:#107c41;border-radius:10px;"></div>
<span class="t" style="left:109.00px;top:16.00px;height:16px;line-height:16px;font-size:12.2px;color:#fff;transform:scaleX(0.9217);transform-origin:0 50%;">On</span>
<div style="left:131px;top:16px;width:14px;height:14px;background:#fff;border-radius:7px;"></div>
<svg style="left:160px;top:15px;" width="19" height="18" viewBox="0 0 19 18"><path d="M1.5 1.5 H13 L16 4.5 V8 M1.5 1.5 V15.5 H7.5 M4.5 1.5 V6.5 H11.5 V1.5 M4.5 15.5 V10.5 H8" fill="none" stroke="#444" stroke-width="1.2" stroke-linejoin="round"/><path d="M9.3 12.2 A3.6 3.6 0 0 1 15.8 10.2 M16.8 13 A3.6 3.6 0 0 1 10.3 15" fill="none" stroke="#1e9e55" stroke-width="1.4"/><path d="M16.2 8 V10.6 H13.6 M9.9 17.2 V14.6 H12.5" fill="none" stroke="#1e9e55" stroke-width="1.3"/></svg>
<svg style="left:189px;top:14px;" width="18" height="19" viewBox="0 0 18 19"><path d="M2 2.5 V8.5 H8" fill="none" stroke="#333" stroke-width="1.3" stroke-linecap="round" stroke-linejoin="round"/><path d="M2.3 8.3 C5 4 9.5 2.2 13 4.6 C16.6 7.2 15.6 11.5 12.5 13.8 L7.5 17.5" fill="none" stroke="#333" stroke-width="1.3" stroke-linecap="round"/></svg>
<svg style="left:209.5px;top:19.5px;" width="10" height="8" viewBox="0 0 10 8"><path d="M2.4 2.7 L5 5.3 L7.6 2.7" fill="none" stroke="#333" stroke-width="1.2" stroke-linecap="round" stroke-linejoin="round"/></svg>
<svg style="left:229px;top:14px;" width="18" height="19" viewBox="0 0 18 19"><path d="M16 2.5 V8.5 H10" fill="none" stroke="#b4b4b4" stroke-width="1.3" stroke-linecap="round" stroke-linejoin="round"/><path d="M15.7 8.3 C13 4 8.5 2.2 5 4.6 C1.4 7.2 2.4 11.5 5.5 13.8 L10.5 17.5" fill="none" stroke="#b4b4b4" stroke-width="1.3" stroke-linecap="round"/></svg>
<svg style="left:248.5px;top:19.5px;" width="10" height="8" viewBox="0 0 10 8"><path d="M2.4 2.7 L5 5.3 L7.6 2.7" fill="none" stroke="#bdbdbd" stroke-width="1.2" stroke-linecap="round" stroke-linejoin="round"/></svg>
<svg style="left:270px;top:18px;" width="12" height="12" viewBox="0 0 12 12"><path d="M2.5 3 H9.5" stroke="#333" stroke-width="1.2" stroke-linecap="round"/><path d="M3 6.2 L6 9 L9 6.2" fill="none" stroke="#333" stroke-width="1.2" stroke-linecap="round" stroke-linejoin="round"/></svg>
<span class="t" style="left:305.30px;top:16.30px;height:16px;line-height:16px;font-size:12.4px;color:#242424;transform:scaleX(0.9505);transform-origin:0 50%;">Master - Company Payroll Reminders</span>
<svg style="left:509px;top:17px;" width="15" height="14" viewBox="0 0 15 14"><circle cx="9.6" cy="3.9" r="2.3" fill="none" stroke="#333" stroke-width="1.1"/><circle cx="4.6" cy="7.4" r="1.9" fill="none" stroke="#333" stroke-width="1.1"/><path d="M1 13.2 C1.4 10.4 3 9.6 4.6 9.6 C6.2 9.6 7.2 10.2 7.8 11.2" fill="none" stroke="#333" stroke-width="1.1" stroke-linecap="round"/><path d="M6.6 9.2 C7.4 7.6 8.4 7 9.8 7 C11.6 7 12.8 8 13.4 9.6" fill="none" stroke="#333" stroke-width="1.1" stroke-linecap="round"/></svg>
<div style="left:532px;top:23px;width:3px;height:3px;background:#333;border-radius:2px;"></div>
<span class="t" style="left:541.20px;top:16.30px;height:16px;line-height:16px;font-size:12.4px;color:#242424;transform:scaleX(0.8532);transform-origin:0 50%;">Saved</span>
<svg style="left:576px;top:20px;" width="12" height="9" viewBox="0 0 12 9"><path d="M1.6 1.8 L6 6.4 L10.4 1.8" fill="none" stroke="#333" stroke-width="1.25" stroke-linecap="round" stroke-linejoin="round"/></svg>
<div style="left:784px;top:8px;width:368px;height:32px;background:#fbfbfb;border:1px solid #dedede;border-bottom-color:#c9c9c9;border-radius:5px;box-shadow:0 1px 1.5px rgba(0,0,0,.08);"></div>
<svg style="left:797px;top:16px;" width="16" height="16" viewBox="0 0 16 16"><circle cx="10" cy="6" r="4.6" fill="none" stroke="#666" stroke-width="1.1"/><path d="M6.6 9.6 L1.2 15" stroke="#666" stroke-width="1.2" stroke-linecap="round"/></svg>
<span class="t" style="left:826.00px;top:16.90px;height:16px;line-height:16px;font-size:12.6px;color:#5a5a5a;transform:scaleX(0.9643);transform-origin:0 50%;">Search</span>
<svg style="left:1740px;top:12px;" width="24" height="24" viewBox="0 0 24 24"><defs><clipPath id="av"><circle cx="12" cy="12" r="11.8"/></clipPath></defs><g clip-path="url(#av)"><rect width="24" height="24" fill="#efedeb"/><path d="M3.6 21 C2.6 16 4.6 13 5.4 10 C6 5 8.6 2.2 12.4 2.2 C16.4 2.2 18.6 5.2 19 9.6 C19.4 13 21.4 15.6 20.2 21 Z" fill="#9c7a4e"/><path d="M5.6 19 C5 15.6 6.6 13.4 7 10.6 C7.4 7 9 4 12.4 4 C11 6.4 9.6 8.6 8.8 11.4 C8.2 14 8 16.4 8.2 19 Z" fill="#c9a874"/><path d="M16.6 6 C18.2 9 17.6 12.6 18.6 15 C19.2 16.6 19 18 18.4 19.4 L16.2 19 C16.8 15 16.4 10 16.6 6 Z" fill="#c4a06a"/><ellipse cx="12.6" cy="9.8" rx="3.3" ry="4.4" fill="#e9c5aa" transform="rotate(6 12.6 9.8)"/><path d="M9.2 8.6 C9.6 5 15.2 4.2 16.2 8.4 C14.6 7.8 13.2 6.6 12.6 5.8 C11.6 7.2 10.4 8.2 9.2 8.6 Z" fill="#b08c5a"/><path d="M11 11.9 C11.8 12.8 13.6 12.8 14.4 11.8 C13.6 12.2 11.8 12.3 11 11.9 Z" fill="#fff"/><path d="M1.6 24 C2.6 18.6 7 17.4 10.2 16.6 L12.6 20.4 L15 16.6 C18.4 17.4 21.4 19.4 22.4 24 Z" fill="#15171f"/><path d="M10.8 14.6 L12.6 20.4 L14.4 14.6 Z" fill="#e9c5aa"/></g></svg>
<svg style="left:1794px;top:18px;" width="12" height="12" viewBox="0 0 12 12"><path d="M1 5.5 H11" stroke="#222" stroke-width="1.1"/></svg>
<svg style="left:1842px;top:18px;" width="12" height="12" viewBox="0 0 12 12"><rect x="1" y="3" width="8" height="8" rx="1.8" fill="none" stroke="#222" stroke-width="1.1"/><path d="M3.4 1.2 H8.6 A2.2 2.2 0 0 1 10.8 3.4 V8.6" fill="none" stroke="#222" stroke-width="1.1"/></svg>
<svg style="left:1890px;top:18px;" width="12" height="12" viewBox="0 0 12 12"><path d="M1 1 L11 11 M11 1 L1 11" stroke="#222" stroke-width="1.1"/></svg>
<div style="left:1739px;top:51px;width:90px;height:24px;background:#fff;border:1px solid #7c7c7c;border-radius:4px;"></div>
<svg style="left:1744px;top:57px;" width="13" height="12" viewBox="0 0 13 12"><path d="M1.2 1.2 H11.2 V7.6 H4.8 L2.4 10 V7.6 H1.2 Z" fill="none" stroke="#333" stroke-width="1.1" stroke-linejoin="round"/></svg>
<span class="t" style="left:1760.60px;top:55.60px;height:16px;line-height:16px;font-size:12.6px;color:#242424;transform:scaleX(1.0063);transform-origin:0 50%;">Comments</span>
<div style="left:1837px;top:51px;width:71px;height:24px;background:#107c41;border-radius:4px;"></div>
<svg style="left:1841px;top:56px;" width="14" height="14" viewBox="0 0 14 14"><path d="M4.2 4.4 H1.6 V12.6 H11.6 V9.6" fill="none" stroke="#fff" stroke-width="1.1" stroke-linejoin="round"/><path d="M8.2 1.6 L12.4 5 L8.2 8.4 V6.4 C5.8 6.4 4.6 7.4 3.8 9.2 C4 5.8 5.6 3.8 8.2 3.6 Z" fill="none" stroke="#fff" stroke-width="1.05" stroke-linejoin="round"/></svg>
<span class="t" style="left:1858.00px;top:55.10px;height:17px;line-height:17px;font-size:12.8px;color:#fff;transform:scaleX(0.9544);transform-origin:0 50%;">Share</span>
<svg style="left:1895.6px;top:59.6px;" width="10" height="8" viewBox="0 0 10 8"><path d="M2.2 2.6 L5 5.4 L7.8 2.6" fill="none" stroke="#fff" stroke-width="1.2" stroke-linecap="round" stroke-linejoin="round"/></svg>
<div style="left:8px;top:78px;width:1904px;height:130px;background:#ffffff;border-radius:8px;box-shadow:0 1px 3px rgba(0,0,0,.18);overflow:hidden;"></div>
<div style="left:8px;top:178px;width:1904px;height:30px;background:#fef8d5;border-radius:0 0 8px 8px;"></div>
<div style="left:119px;top:83.5px;width:1px;height:88.0px;background:#d4d4d4;"></div>
<div style="left:355px;top:83.5px;width:1px;height:88.0px;background:#d4d4d4;"></div>
<div style="left:657px;top:83.5px;width:1px;height:88.0px;background:#d4d4d4;"></div>
<div style="left:819px;top:83.5px;width:1px;height:88.0px;background:#d4d4d4;"></div>
<div style="left:1017px;top:83.5px;width:1px;height:88.0px;background:#d4d4d4;"></div>
<div style="left:1164px;top:83.5px;width:1px;height:88.0px;background:#d4d4d4;"></div>
<div style="left:1380px;top:83.5px;width:1px;height:88.0px;background:#d4d4d4;"></div>
<div style="left:1454px;top:83.5px;width:1px;height:88.0px;background:#d4d4d4;"></div>
<div style="left:1517px;top:83.5px;width:1px;height:88.0px;background:#d4d4d4;"></div>
<div style="left:1577px;top:83.5px;width:1px;height:88.0px;background:#d4d4d4;"></div>
<div style="left:1772px;top:83.5px;width:1px;height:88.0px;background:#d4d4d4;"></div>
<div style="left:1869px;top:83.5px;width:1px;height:88.0px;background:#d4d4d4;"></div>
<svg style="left:29px;top:86px;" width="30" height="32" viewBox="0 0 30 32"><rect x="1.7" y="5.7" width="19.4" height="22.6" fill="#fde9b4" stroke="#e8830c" stroke-width="1.4"/><rect x="3.6" y="7.6" width="15.6" height="18.8" fill="#f9f9f9"/><path d="M5.6 4.6 H8.4 C8.6 0.2 14.6 0.2 14.8 4.6 H17.6 V8.6 H5.6 Z" fill="#fafafa" stroke="#7a7a7a" stroke-width="1.1" stroke-linejoin="round"/><rect x="14.7" y="13.7" width="13.4" height="17.2" fill="#fafafa" stroke="#333" stroke-width="1.3"/></svg>
<span class="t" style="left:25.45px;top:121.40px;height:16px;line-height:16px;font-size:12.4px;color:#242424;transform:scaleX(0.8641);transform-origin:50% 50%;">Paste</span>
<svg style="left:35.3px;top:140.6px;" width="10" height="8" viewBox="0 0 10 8"><path d="M2.6 2.8 L5 5.2 L7.4 2.8" fill="none" stroke="#333" stroke-width="1.1" stroke-linecap="round" stroke-linejoin="round"/></svg>
<svg style="left:70px;top:85px;" width="13" height="18" viewBox="0 0 13 18"><path d="M3.2 1.2 C3.6 4 5 7 7.6 11.4 L8.6 13.2 M9.2 1.2 C8.8 4 7.4 7 4.8 11.4 L3.8 13.2" stroke="#555" stroke-width="1" fill="none"/><circle cx="3.3" cy="15" r="1.7" fill="none" stroke="#1f87d6" stroke-width="1.2"/><circle cx="9.1" cy="15" r="1.7" fill="none" stroke="#1f87d6" stroke-width="1.2"/></svg>
<svg style="left:67px;top:111px;" width="18" height="18" viewBox="0 0 18 18"><path d="M8.4 1.6 H3 Q1.6 1.6 1.6 3 V14.6 H7.4" fill="none" stroke="#444" stroke-width="1.1"/><path d="M7.8 4.8 H12.8 L16.6 8.6 V16.6 H7.8 Z" fill="#fafafa" stroke="#444" stroke-width="1.1" stroke-linejoin="round"/><path d="M12.8 4.8 V8.6 H16.6 M10 11.2 H14.4 M10 13.6 H14.4" fill="none" stroke="#444" stroke-width="1"/></svg>
<svg style="left:94.4px;top:116.2px;" width="10" height="8" viewBox="0 0 10 8"><path d="M2.6 2.8 L5 5.2 L7.4 2.8" fill="none" stroke="#333" stroke-width="1.1" stroke-linecap="round" stroke-linejoin="round"/></svg>
<svg style="left:67px;top:137px;" width="18" height="17" viewBox="0 0 18 17"><path d="M9.5 6.5 L14 2 C15 1 16.6 2.6 15.6 3.6 L11.5 8" fill="#fff" stroke="#444" stroke-width="1.1"/><path d="M7.6 5.6 L12.6 10.2 L11 11.8 L6 7.2 Z" fill="#fff" stroke="#444" stroke-width="1"/><path d="M5.4 7.4 L10.6 12.2 L8.6 15.6 L1.4 10 Z" fill="#fbd9b0" stroke="#e8812d" stroke-width="1.1" stroke-linejoin="round"/><path d="M4.2 11.4 L6.6 9.6 M6.4 13.4 L8.6 11.6" stroke="#e8812d" stroke-width=".9"/></svg>
<span class="t" style="left:32.03px;top:161.20px;height:15px;line-height:15px;font-size:11.9px;color:#242424;transform:scaleX(0.9816);transform-origin:50% 50%;">Clipboard</span>
<div style="left:128px;top:90px;width:123px;height:24px;background:#fff;border:1px solid #8f8f8f;border-radius:4px;"></div>
<span class="t" style="left:131.30px;top:94.20px;height:16px;line-height:16px;font-size:12.5px;color:#242424;transform:scaleX(0.9548);transform-origin:0 50%;">Aptos Narrow</span>
<svg style="left:239.1px;top:98.6px;" width="10" height="8" viewBox="0 0 10 8"><path d="M2.5 2.75 L5 5.25 L7.5 2.75" fill="none" stroke="#333" stroke-width="1.1" stroke-linecap="round" stroke-linejoin="round"/></svg>
<div style="left:253px;top:90px;width:43px;height:24px;background:#fff;border:1px solid #8f8f8f;border-radius:4px;"></div>
<span class="t" style="left:256.90px;top:94.20px;height:16px;line-height:16px;font-size:12.5px;color:#242424;transform:scaleX(0.7398);transform-origin:0 50%;">11</span>
<svg style="left:284.3px;top:98.6px;" width="10" height="8" viewBox="0 0 10 8"><path d="M2.5 2.75 L5 5.25 L7.5 2.75" fill="none" stroke="#333" stroke-width="1.1" stroke-linecap="round" stroke-linejoin="round"/></svg>
<span class="t" style="left:303.40px;top:90.70px;height:21px;line-height:21px;font-size:16.5px;color:#333;">A</span>
<svg style="left:314px;top:93px;" width="6" height="4" viewBox="0 0 6 4"><path d="M0.8 3.2 L3 0.9 L5.2 3.2" fill="none" stroke="#1f87d6" stroke-width="1.1"/></svg>
<span class="t" style="left:330.40px;top:93.40px;height:18px;line-height:18px;font-size:13.5px;color:#333;transform:scaleX(1.0439);transform-origin:0 50%;">A</span>
<svg style="left:339px;top:94px;" width="6" height="4" viewBox="0 0 6 4"><path d="M0.8 0.8 L3 3.1 L5.2 0.8" fill="none" stroke="#1f87d6" stroke-width="1.1"/></svg>
<span class="t" style="left:136.30px;top:124.30px;height:18px;line-height:18px;font-size:14px;color:#333;font-weight:bold;transform:scaleX(0.7715);transform-origin:0 50%;">B</span>
<span class="t" style="left:163.00px;top:123.80px;height:19px;line-height:19px;font-size:14.5px;color:#333;font-style:italic;font-family:'Liberation Serif',serif;transform:scaleX(1.2424);transform-origin:0 50%;">I</span>
<span class="t" style="left:187.60px;top:124.30px;height:17px;line-height:17px;font-size:13.4px;color:#333;transform:scaleX(0.8680);transform-origin:0 50%;">U</span>
<div style="left:187px;top:141px;width:9.6px;height:1px;background:#333;"></div>
<svg style="left:205.4px;top:130.3px;" width="10" height="8" viewBox="0 0 10 8"><path d="M2.6 2.8 L5 5.2 L7.4 2.8" fill="none" stroke="#333" stroke-width="1.1" stroke-linecap="round" stroke-linejoin="round"/></svg>
<div style="left:221.5px;top:122.8px;width:1px;height:22.500000000000014px;background:#d4d4d4;"></div>
<div style="left:265.5px;top:122.8px;width:1px;height:22.500000000000014px;background:#d4d4d4;"></div>
<svg style="left:227px;top:125px;" width="17" height="17" viewBox="0 0 17 17"><path d="M1 1.5 H16 M1.5 1 V13.6 M15.5 1 V13.6 M8.5 1 V13.6 M1 7.5 H16" stroke="#555" stroke-width="1" stroke-dasharray="1 1.5" fill="none"/><path d="M0.6 15.6 H16.4" stroke="#222" stroke-width="1.4"/></svg>
<svg style="left:249.3px;top:130.3px;" width="10" height="8" viewBox="0 0 10 8"><path d="M2.6 2.8 L5 5.2 L7.4 2.8" fill="none" stroke="#333" stroke-width="1.1" stroke-linecap="round" stroke-linejoin="round"/></svg>
<svg style="left:271px;top:125px;" width="18" height="18" viewBox="0 0 18 18"><path d="M4.8 7.4 L9 2.4 L13 6.4 L8 11.4 Z" fill="#fff" stroke="#444" stroke-width="1.1" stroke-linejoin="round"/><path d="M9 2.4 L7.6 0.8" stroke="#444" stroke-width="1"/><path d="M12.2 4.4 C14 5.2 14.6 7 14.4 9.4" fill="none" stroke="#1f87d6" stroke-width="1.3"/><rect x="1" y="13.4" width="16" height="3.8" fill="#ffee00"/></svg>
<svg style="left:293.5px;top:130.3px;" width="10" height="8" viewBox="0 0 10 8"><path d="M2.6 2.8 L5 5.2 L7.4 2.8" fill="none" stroke="#333" stroke-width="1.1" stroke-linecap="round" stroke-linejoin="round"/></svg>
<span class="t" style="left:316.53px;top:122.20px;height:18px;line-height:18px;font-size:14px;color:#333;transform:scaleX(1.0494);transform-origin:50% 50%;">A</span>
<div style="left:313px;top:138.4px;width:16px;height:3.8px;background:#e8111a;"></div>
<svg style="left:334.4px;top:130.3px;" width="10" height="8" viewBox="0 0 10 8"><path d="M2.6 2.8 L5 5.2 L7.4 2.8" fill="none" stroke="#333" stroke-width="1.1" stroke-linecap="round" stroke-linejoin="round"/></svg>
<span class="t" style="left:218.19px;top:161.20px;height:15px;line-height:15px;font-size:11.9px;color:#242424;transform:scaleX(0.9869);transform-origin:50% 50%;">Font</span>
<svg style="left:344px;top:164.5px;" width="8" height="8" viewBox="0 0 8 8"><path d="M0.6 3 V0.6 H3" fill="none" stroke="#555" stroke-width="1"/><path d="M2.6 2.6 L7 7 M7 3.6 V7 H3.6" fill="none" stroke="#555" stroke-width="1"/></svg>
<div style="left:369px;top:93.55px;width:14.4px;height:1.1px;background:#333;"></div>
<div style="left:371px;top:97.85000000000001px;width:10.4px;height:1.1px;background:#333;"></div>
<div style="left:369px;top:102.25px;width:14.4px;height:1.1px;background:#333;"></div>
<div style="left:390px;top:90px;width:24px;height:24px;background:#ebebeb;border:1px solid #8f8f8f;border-radius:4px;"></div>
<div style="left:395px;top:96.55px;width:14px;height:1.1px;background:#333;"></div>
<div style="left:397px;top:100.85000000000001px;width:10px;height:1.1px;background:#333;"></div>
<div style="left:395px;top:105.25px;width:14px;height:1.1px;background:#333;"></div>
<div style="left:421px;top:100.75px;width:14.4px;height:1.1px;background:#333;"></div>
<div style="left:423px;top:105.05px;width:10.4px;height:1.1px;background:#333;"></div>
<div style="left:421px;top:109.35000000000001px;width:14.4px;height:1.1px;background:#333;"></div>
<div style="left:442px;top:90.4px;width:1px;height:23.0px;background:#d4d4d4;"></div>
<div style="left:442px;top:122.8px;width:1px;height:22.500000000000014px;background:#d4d4d4;"></div>
<svg style="left:448px;top:92px;" width="19" height="19" viewBox="0 0 19 19"><path d="M7.5 16.5 L17 5.5 M12.4 5.2 H17.2 V10" fill="none" stroke="#1f87d6" stroke-width="1.2"/><text x="0" y="0" font-size="9.2" fill="#444" transform="translate(4.6 12.8) rotate(-40)" font-family="Liberation Sans, sans-serif">ab</text></svg>
<svg style="left:468.4px;top:98.8px;" width="10" height="8" viewBox="0 0 10 8"><path d="M2.6 2.8 L5 5.2 L7.4 2.8" fill="none" stroke="#333" stroke-width="1.1" stroke-linecap="round" stroke-linejoin="round"/></svg>
<div style="left:501px;top:89px;width:1px;height:61px;background:#d4d4d4;"></div>
<svg style="left:513px;top:94px;" width="16" height="17" viewBox="0 0 16 17"><text x="0.6" y="7.4" font-size="8.6" fill="#444" font-family="Liberation Sans, sans-serif">ab</text><text x="0.6" y="15.4" font-size="8.6" fill="#444" font-family="Liberation Sans, sans-serif">c</text><path d="M11 4 H12 A2.6 2.6 0 0 1 12 12 H7 M9 9.8 L6.8 12 L9 14.2" fill="none" stroke="#1f87d6" stroke-width="1.2"/></svg>
<span class="t" style="left:532.30px;top:95.20px;height:16px;line-height:16px;font-size:12.4px;color:#242424;transform:scaleX(0.9302);transform-origin:0 50%;">Wrap Text</span>
<div style="left:369px;top:127.35000000000001px;width:14.4px;height:1.1px;background:#333;"></div>
<div style="left:369px;top:131.35px;width:9.5px;height:1.1px;background:#333;"></div>
<div style="left:369px;top:135.35px;width:14.4px;height:1.1px;background:#333;"></div>
<div style="left:369px;top:139.25px;width:9.5px;height:1.1px;background:#333;"></div>
<div style="left:395px;top:127.35000000000001px;width:14px;height:1.1px;background:#333;"></div>
<div style="left:397.5px;top:131.35px;width:9px;height:1.1px;background:#333;"></div>
<div style="left:395px;top:135.35px;width:14px;height:1.1px;background:#333;"></div>
<div style="left:397.5px;top:139.25px;width:9px;height:1.1px;background:#333;"></div>
<div style="left:421px;top:127.35000000000001px;width:14.4px;height:1.1px;background:#333;"></div>
<div style="left:425.9px;top:131.35px;width:9.5px;height:1.1px;background:#333;"></div>
<div style="left:421px;top:135.35px;width:14.4px;height:1.1px;background:#333;"></div>
<div style="left:425.9px;top:139.25px;width:9.5px;height:1.1px;background:#333;"></div>
<svg style="left:449px;top:126px;" width="16" height="16" viewBox="0 0 16 16"><path d="M1 1.6 H15 M8 5.6 H15 M8 9.6 H15 M1 13.6 H15" stroke="#333" stroke-width="1.1"/><path d="M6.4 7.6 H1.2 M3.4 5.4 L1.2 7.6 L3.4 9.8" fill="none" stroke="#1f87d6" stroke-width="1.2"/></svg>
<svg style="left:475px;top:126px;" width="16" height="16" viewBox="0 0 16 16"><path d="M1 1.6 H15 M8 5.6 H15 M8 9.6 H15 M1 13.6 H15" stroke="#333" stroke-width="1.1"/><path d="M0.8 7.6 H6 M3.8 5.4 L6 7.6 L3.8 9.8" fill="none" stroke="#1f87d6" stroke-width="1.2"/></svg>
<svg style="left:512px;top:125px;" width="16" height="17" viewBox="0 0 16 17"><rect x="0.6" y="0.8" width="14.6" height="14.8" fill="none" stroke="#444" stroke-width="1.1"/><path d="M0.6 4.2 H15.2 M0.6 12.2 H15.2 M5.4 0.8 V4.2 M10.4 0.8 V4.2 M5.4 12.2 V15.6 M10.4 12.2 V15.6" stroke="#444" stroke-width="1"/><rect x="1.2" y="4.8" width="13.4" height="6.8" fill="#dcecfa"/><path d="M2.6 8.2 H13.2 M4.8 6 L2.6 8.2 L4.8 10.4 M11 6 L13.2 8.2 L11 10.4" fill="none" stroke="#1f87d6" stroke-width="1.2"/></svg>
<span class="t" style="left:532.30px;top:127.10px;height:16px;line-height:16px;font-size:12.4px;color:#242424;transform:scaleX(0.9665);transform-origin:0 50%;">Merge &amp; Center</span>
<svg style="left:632.5px;top:130.5px;" width="10" height="8" viewBox="0 0 10 8"><path d="M2.6 2.8 L5 5.2 L7.4 2.8" fill="none" stroke="#333" stroke-width="1.1" stroke-linecap="round" stroke-linejoin="round"/></svg>
<span class="t" style="left:472.04px;top:161.20px;height:15px;line-height:15px;font-size:11.9px;color:#242424;transform:scaleX(0.9921);transform-origin:50% 50%;">Alignment</span>
<svg style="left:646px;top:164.5px;" width="8" height="8" viewBox="0 0 8 8"><path d="M0.6 3 V0.6 H3" fill="none" stroke="#555" stroke-width="1"/><path d="M2.6 2.6 L7 7 M7 3.6 V7 H3.6" fill="none" stroke="#555" stroke-width="1"/></svg>
<div style="left:666px;top:90px;width:146px;height:24px;background:#fff;border:1px solid #8f8f8f;border-radius:4px;"></div>
<span class="t" style="left:669.70px;top:94.20px;height:16px;line-height:16px;font-size:12.5px;color:#242424;transform:scaleX(0.8725);transform-origin:0 50%;">General</span>
<svg style="left:800.3px;top:98.6px;" width="10" height="8" viewBox="0 0 10 8"><path d="M2.5 2.75 L5 5.25 L7.5 2.75" fill="none" stroke="#333" stroke-width="1.1" stroke-linecap="round" stroke-linejoin="round"/></svg>
<span class="t" style="left:673.60px;top:121.10px;height:25px;line-height:25px;font-size:19px;color:#333;transform:scaleX(0.7192);transform-origin:0 50%;">$</span>
<svg style="left:691.3px;top:130.5px;" width="10" height="8" viewBox="0 0 10 8"><path d="M2.6 2.8 L5 5.2 L7.4 2.8" fill="none" stroke="#333" stroke-width="1.1" stroke-linecap="round" stroke-linejoin="round"/></svg>
<span class="t" style="left:711.30px;top:121.80px;height:24px;line-height:24px;font-size:18.4px;color:#333;transform:scaleX(0.9413);transform-origin:0 50%;">%</span>
<span class="t" style="left:741.60px;top:95.70px;height:49px;line-height:49px;font-size:37.5px;color:#333;font-weight:bold;font-family:'Liberation Serif',serif;transform:scaleX(0.8320);transform-origin:0 50%;">,</span>
<div style="left:759px;top:122.8px;width:1px;height:22.500000000000014px;background:#d4d4d4;"></div>
<svg style="left:765px;top:125px;" width="17" height="17" viewBox="0 0 17 17"><path d="M10.2 5.4 H1.2 M4 2.6 L1.2 5.4 L4 8.2" fill="none" stroke="#1f87d6" stroke-width="1.2"/><text x="11.6" y="8.2" font-size="9" fill="#444" font-family="Liberation Sans, sans-serif">0</text><text x="2.8" y="16.4" font-size="9" fill="#444" font-family="Liberation Sans, sans-serif">.00</text></svg>
<svg style="left:791px;top:125px;" width="17" height="17" viewBox="0 0 17 17"><text x="2.8" y="8.2" font-size="9" fill="#444" font-family="Liberation Sans, sans-serif">.00</text><path d="M0.8 12.6 H9.6 M6.8 9.8 L9.6 12.6 L6.8 15.4" fill="none" stroke="#1f87d6" stroke-width="1.2"/><text x="8.4" y="16.4" font-size="9" fill="#444" font-family="Liberation Sans, sans-serif">.0</text></svg>
<span class="t" style="left:709.44px;top:161.20px;height:15px;line-height:15px;font-size:11.9px;color:#242424;transform:scaleX(0.9569);transform-origin:50% 50%;">Number</span>
<svg style="left:808px;top:164.5px;" width="8" height="8" viewBox="0 0 8 8"><path d="M0.6 3 V0.6 H3" fill="none" stroke="#555" stroke-width="1"/><path d="M2.6 2.6 L7 7 M7 3.6 V7 H3.6" fill="none" stroke="#555" stroke-width="1"/></svg>
<svg style="left:851px;top:90px;" width="29" height="23" viewBox="0 0 29 23"><rect x="0.5" y="0.5" width="27.5" height="21.5" fill="#fff" stroke="#444" stroke-width="1"/><path d="M7.4 0.5 V22.0" stroke="#666" stroke-width=".9"/><path d="M14.2 0.5 V22.0" stroke="#666" stroke-width=".9"/><path d="M21.1 0.5 V22.0" stroke="#666" stroke-width=".9"/><path d="M0.5 7.7 H28.0" stroke="#666" stroke-width=".9"/><path d="M0.5 14.8 H28.0" stroke="#666" stroke-width=".9"/><rect x="5.6" y="1" width="12" height="6.6" fill="#fd9ba3" stroke="#e5232e" stroke-width="1"/><rect x="5.6" y="8.2" width="7.6" height="6.6" fill="#8ec1ee" stroke="#1f87d6" stroke-width="1"/><rect x="5.6" y="15.2" width="14.4" height="6.6" fill="#fd9ba3" stroke="#e5232e" stroke-width="1"/></svg>
<span class="t" style="left:834.18px;top:120.20px;height:16px;line-height:16px;font-size:12.4px;color:#242424;transform:scaleX(0.9832);transform-origin:50% 50%;">Conditional</span>
<span class="t" style="left:830.40px;top:136.10px;height:16px;line-height:16px;font-size:12.4px;color:#242424;transform:scaleX(0.9820);transform-origin:0 50%;">Formatting</span>
<svg style="left:890.8px;top:139.6px;" width="10" height="8" viewBox="0 0 10 8"><path d="M2.7 2.85 L5 5.15 L7.3 2.85" fill="none" stroke="#333" stroke-width="1.1" stroke-linecap="round" stroke-linejoin="round"/></svg>
<svg style="left:919px;top:90px;" width="32" height="28" viewBox="0 0 32 28"><rect x="0.5" y="0.5" width="27" height="21" fill="#fff" stroke="#444" stroke-width="1"/><path d="M9.5 0.5 V21.5" stroke="#666" stroke-width=".9"/><path d="M18.5 0.5 V21.5" stroke="#666" stroke-width=".9"/><path d="M0.5 7.5 H27.5" stroke="#666" stroke-width=".9"/><path d="M0.5 14.5 H27.5" stroke="#666" stroke-width=".9"/><rect x="9.6" y="7.6" width="18" height="14" fill="#8ec1ee" stroke="#1f87d6" stroke-width="1"/><path d="M9.6 14.6 H27.6 M18.6 7.6 V21.6" stroke="#1f87d6" stroke-width=".9"/><path d="M30.6 6.4 C31.3 6.9 31.1 7.8 30.6 8.6 L21.3 21.3 L18.6 19.4 L28.6 6.8 C29.2 6 30 5.9 30.6 6.4 Z" fill="#f4f4f4" stroke="#444" stroke-width="1"/><path d="M18.6 19.4 C15 18.4 13 21 13 23.6 C12 24.8 10 25.4 8.4 25 C11.4 27.8 19 27.6 21.3 21.3 Z" fill="#6fb0e8" stroke="#1f78c8" stroke-width=".9"/></svg>
<span class="t" style="left:905.19px;top:120.20px;height:16px;line-height:16px;font-size:12.4px;color:#242424;transform:scaleX(0.9209);transform-origin:50% 50%;">Format as</span>
<span class="t" style="left:915.00px;top:136.10px;height:16px;line-height:16px;font-size:12.4px;color:#242424;transform:scaleX(0.9108);transform-origin:0 50%;">Table</span>
<svg style="left:944.3px;top:139.6px;" width="10" height="8" viewBox="0 0 10 8"><path d="M2.7 2.85 L5 5.15 L7.3 2.85" fill="none" stroke="#333" stroke-width="1.1" stroke-linecap="round" stroke-linejoin="round"/></svg>
<svg style="left:973px;top:90px;" width="32" height="28" viewBox="0 0 32 28"><rect x="0.5" y="0.5" width="27" height="21" fill="#fff" stroke="#444" stroke-width="1"/><path d="M7.2 0.5 V21.5" stroke="#666" stroke-width=".9"/><path d="M14.0 0.5 V21.5" stroke="#666" stroke-width=".9"/><path d="M20.8 0.5 V21.5" stroke="#666" stroke-width=".9"/><path d="M0.5 7.5 H27.5" stroke="#666" stroke-width=".9"/><path d="M0.5 14.5 H27.5" stroke="#666" stroke-width=".9"/><rect x="5.6" y="5" width="17.4" height="12.4" fill="#8ec1ee" stroke="#1f87d6" stroke-width="1"/><path d="M30.6 6.4 C31.3 6.9 31.1 7.8 30.6 8.6 L21.3 21.3 L18.6 19.4 L28.6 6.8 C29.2 6 30 5.9 30.6 6.4 Z" fill="#f4f4f4" stroke="#444" stroke-width="1"/><path d="M18.6 19.4 C15 18.4 13 21 13 23.6 C12 24.8 10 25.4 8.4 25 C11.4 27.8 19 27.6 21.3 21.3 Z" fill="#6fb0e8" stroke="#1f78c8" stroke-width=".9"/></svg>
<span class="t" style="left:976.12px;top:120.20px;height:16px;line-height:16px;font-size:12.4px;color:#242424;transform:scaleX(0.9035);transform-origin:50% 50%;">Cell</span>
<span class="t" style="left:966.30px;top:136.10px;height:16px;line-height:16px;font-size:12.4px;color:#242424;transform:scaleX(0.8795);transform-origin:0 50%;">Styles</span>
<svg style="left:997.7px;top:139.6px;" width="10" height="8" viewBox="0 0 10 8"><path d="M2.7 2.85 L5 5.15 L7.3 2.85" fill="none" stroke="#333" stroke-width="1.1" stroke-linecap="round" stroke-linejoin="round"/></svg>
<span class="t" style="left:902.10px;top:161.20px;height:15px;line-height:15px;font-size:11.9px;color:#242424;transform:scaleX(0.8579);transform-origin:50% 50%;">Styles</span>
<svg style="left:1031px;top:89px;" width="33" height="24" viewBox="0 0 33 24"><g opacity=".8"><rect x="2.5" y="1" width="26" height="21.6" fill="#f4f4f4" stroke="#9a9a9a"/><path d="M2.5 8.2 H28.5 M2.5 15.4 H28.5 M11.2 1 V22.6 M19.8 1 V22.6" stroke="#9a9a9a" stroke-width=".9"/><rect x="11.2" y="8.2" width="20.6" height="7.2" fill="#bdbdbd" stroke="#9a9a9a"/><path d="M19.8 8.2 V15.4 M26 8.2 V15.4" stroke="#9a9a9a" stroke-width=".9"/><path d="M11 11.8 H1 M4.6 7.6 L0.8 11.8 L4.6 16" fill="none" stroke="#c6c6c6" stroke-width="1.6"/></g></svg>
<span class="t" style="left:1030.99px;top:121.30px;height:16px;line-height:16px;font-size:12.4px;color:#242424;transform:scaleX(0.9190);transform-origin:50% 50%;">Insert</span>
<svg style="left:1041.3px;top:140.4px;" width="10" height="8" viewBox="0 0 10 8"><path d="M2.7 2.85 L5 5.15 L7.3 2.85" fill="none" stroke="#333" stroke-width="1.1" stroke-linecap="round" stroke-linejoin="round"/></svg>
<svg style="left:1076px;top:89px;" width="32" height="24" viewBox="0 0 32 24"><rect x="1" y="1" width="28" height="21.6" fill="#fff" stroke="#444"/><path d="M1 8.2 H29 M1 15.4 H29 M10.3 1 V8.2 M19.6 1 V8.2 M10.3 15.4 V22.6 M19.6 15.4 V22.6" stroke="#444" stroke-width=".9"/><rect x="5" y="8.2" width="13" height="7.2" fill="#8ec1ee" stroke="#1f87d6"/><path d="M13 8.2 V15.4" stroke="#1f87d6" stroke-width=".9"/><path d="M18 8.2 L21.6 11.8 L18 15.4 Z" fill="#1f87d6"/><path d="M20.4 6.2 L30.6 16.6 M30.6 6.2 L20.4 16.6" stroke="#e8434d" stroke-width="1.2"/></svg>
<span class="t" style="left:1073.08px;top:121.30px;height:16px;line-height:16px;font-size:12.4px;color:#242424;transform:scaleX(0.9123);transform-origin:50% 50%;">Delete</span>
<svg style="left:1085.2px;top:140.4px;" width="10" height="8" viewBox="0 0 10 8"><path d="M2.7 2.85 L5 5.15 L7.3 2.85" fill="none" stroke="#333" stroke-width="1.1" stroke-linecap="round" stroke-linejoin="round"/></svg>
<svg style="left:1120px;top:85px;" width="30" height="28" viewBox="0 0 30 28"><path d="M6.4 1.6 H22.4 M6.4 0 V3.2 M22.4 0 V3.2" stroke="#1f87d6" stroke-width="1"/><rect x="1" y="5" width="27.6" height="21.8" fill="#fff" stroke="#444"/><path d="M1 12.2 H28.6 M1 19.4 H28.6 M7.6 5 V26.8 M21.6 5 V26.8" stroke="#444" stroke-width=".9"/><rect x="7.6" y="12.2" width="14" height="7.2" fill="#8ec1ee" stroke="#1f87d6"/></svg>
<span class="t" style="left:1115.56px;top:120.20px;height:16px;line-height:16px;font-size:12.4px;color:#242424;transform:scaleX(0.9651);transform-origin:50% 50%;">Format</span>
<svg style="left:1129.6px;top:139.3px;" width="10" height="8" viewBox="0 0 10 8"><path d="M2.7 2.85 L5 5.15 L7.3 2.85" fill="none" stroke="#333" stroke-width="1.1" stroke-linecap="round" stroke-linejoin="round"/></svg>
<span class="t" style="left:1077.77px;top:161.20px;height:15px;line-height:15px;font-size:11.9px;color:#242424;transform:scaleX(0.8695);transform-origin:50% 50%;">Cells</span>
<svg style="left:1178px;top:87px;" width="14" height="15" viewBox="0 0 14 15"><path d="M12.4 3.4 V1 H1.4 L7.4 7.4 L1.4 13.8 H12.4 V11.4" fill="none" stroke="#333" stroke-width="1.15" stroke-linejoin="round"/></svg>
<span class="t" style="left:1197.30px;top:87.30px;height:16px;line-height:16px;font-size:12.4px;color:#242424;transform:scaleX(0.9646);transform-origin:0 50%;">AutoSum</span>
<svg style="left:1262.3px;top:91px;" width="10" height="8" viewBox="0 0 10 8"><path d="M2.7 2.85 L5 5.15 L7.3 2.85" fill="none" stroke="#333" stroke-width="1.1" stroke-linecap="round" stroke-linejoin="round"/></svg>
<svg style="left:1176px;top:112px;" width="18" height="16" viewBox="0 0 18 16"><rect x="1.2" y="1.6" width="15" height="13" fill="#fff" stroke="#333" stroke-width="1.1"/><path d="M1.2 3.6 H16.2" stroke="#333" stroke-width="1"/><path d="M8.7 5.6 V12 M6 9.4 L8.7 12.2 L11.4 9.4" fill="none" stroke="#1f87d6" stroke-width="1.2"/></svg>
<span class="t" style="left:1197.30px;top:112.90px;height:16px;line-height:16px;font-size:12.4px;color:#242424;transform:scaleX(0.9217);transform-origin:0 50%;">Fill</span>
<svg style="left:1213.5px;top:117px;" width="10" height="8" viewBox="0 0 10 8"><path d="M2.7 2.85 L5 5.15 L7.3 2.85" fill="none" stroke="#333" stroke-width="1.1" stroke-linecap="round" stroke-linejoin="round"/></svg>
<svg style="left:1176px;top:137px;" width="18" height="18" viewBox="0 0 18 18"><path d="M1.4 10.6 L10.4 1.6 L16 7 L7 16 H4.6 Z" fill="#fff" stroke="#b146c2" stroke-width="1.2" stroke-linejoin="round"/><path d="M1.4 10.6 L5.2 6.8 L10.8 12.2 L7 16 H4.6 Z" fill="#d48ae0" stroke="#b146c2" stroke-width="1.1" stroke-linejoin="round"/></svg>
<span class="t" style="left:1197.30px;top:139.00px;height:16px;line-height:16px;font-size:12.4px;color:#242424;transform:scaleX(0.9010);transform-origin:0 50%;">Clear</span>
<svg style="left:1225.6px;top:143px;" width="10" height="8" viewBox="0 0 10 8"><path d="M2.7 2.85 L5 5.15 L7.3 2.85" fill="none" stroke="#333" stroke-width="1.1" stroke-linecap="round" stroke-linejoin="round"/></svg>
<svg style="left:1288px;top:86px;" width="31" height="30" viewBox="0 0 31 30"><text x="0.4" y="12.6" font-size="15" fill="#1f87d6" font-family="Liberation Sans, sans-serif">A</text><text x="0.8" y="28" font-size="15" fill="#333" font-family="Liberation Sans, sans-serif">Z</text><path d="M13.6 9 H29 L23.4 15.4 V23.2 L19.6 23.2 V15.4 Z" fill="#fff" stroke="#333" stroke-width="1.15" stroke-linejoin="round"/></svg>
<span class="t" style="left:1285.77px;top:120.20px;height:16px;line-height:16px;font-size:12.4px;color:#242424;transform:scaleX(0.9548);transform-origin:50% 50%;">Sort &amp;</span>
<span class="t" style="left:1284.80px;top:136.20px;height:16px;line-height:16px;font-size:12.4px;color:#242424;transform:scaleX(0.9508);transform-origin:0 50%;">Filter</span>
<svg style="left:1311.5px;top:139.6px;" width="10" height="8" viewBox="0 0 10 8"><path d="M2.7 2.85 L5 5.15 L7.3 2.85" fill="none" stroke="#333" stroke-width="1.1" stroke-linecap="round" stroke-linejoin="round"/></svg>
<svg style="left:1333px;top:86px;" width="31" height="31" viewBox="0 0 31 31"><circle cx="19.4" cy="11.4" r="10" fill="none" stroke="#333" stroke-width="1.15"/><path d="M12.4 18.6 L1.4 29.6" stroke="#333" stroke-width="1.2"/></svg>
<span class="t" style="left:1331.08px;top:120.20px;height:16px;line-height:16px;font-size:12.4px;color:#242424;transform:scaleX(0.9654);transform-origin:50% 50%;">Find &amp;</span>
<span class="t" style="left:1328.50px;top:136.20px;height:16px;line-height:16px;font-size:12.4px;color:#242424;transform:scaleX(0.8792);transform-origin:0 50%;">Select</span>
<svg style="left:1360.8px;top:139.6px;" width="10" height="8" viewBox="0 0 10 8"><path d="M2.7 2.85 L5 5.15 L7.3 2.85" fill="none" stroke="#333" stroke-width="1.1" stroke-linecap="round" stroke-linejoin="round"/></svg>
<span class="t" style="left:1254.21px;top:161.20px;height:15px;line-height:15px;font-size:11.9px;color:#242424;transform:scaleX(0.9784);transform-origin:50% 50%;">Editing</span>
<svg style="left:1472px;top:87px;" width="29" height="28" viewBox="0 0 29 28"><rect x="0.7" y="0.7" width="27" height="26.6" fill="#fff" stroke="#d83b01" stroke-width="1.3"/><rect x="3.8" y="3.8" width="8.6" height="8.4" fill="none" stroke="#d83b01" stroke-width="1.2"/><rect x="15.8" y="3.8" width="8.6" height="8.4" fill="none" stroke="#d83b01" stroke-width="1.2"/><rect x="3.8" y="15.6" width="8.6" height="8.4" fill="none" stroke="#d83b01" stroke-width="1.2"/><rect x="15.8" y="15.6" width="8.6" height="8.4" fill="none" stroke="#d83b01" stroke-width="1.2"/></svg>
<span class="t" style="left:1464.98px;top:120.20px;height:16px;line-height:16px;font-size:12.4px;color:#242424;">Add-ins</span>
<svg style="left:1532px;top:86px;" width="32" height="30" viewBox="0 0 32 30"><defs><linearGradient id="cpa" x1="0" y1="0" x2="0" y2="1"><stop offset="0" stop-color="#1f9bea"/><stop offset=".35" stop-color="#2aa3c8"/><stop offset=".62" stop-color="#55b55a"/><stop offset=".9" stop-color="#f0c512"/><stop offset="1" stop-color="#f6b61c"/></linearGradient><linearGradient id="cpb" x1="0" y1="0" x2="0" y2="1"><stop offset="0" stop-color="#a45aea"/><stop offset=".45" stop-color="#ea5a9a"/><stop offset=".8" stop-color="#f7846a"/><stop offset="1" stop-color="#fcab4a"/></linearGradient><linearGradient id="cpc" x1="0" y1="0" x2="1" y2="1"><stop offset="0" stop-color="#1746cf"/><stop offset="1" stop-color="#2f78e6"/></linearGradient></defs>
<path d="M15 1 H20 C22 1 22.9 2 23.5 4 L25 9.2 H18.6 C19.6 5 18.6 1.4 15 1 Z" fill="url(#cpc)"/>
<path d="M8 21 H13.4 C12.6 23.4 12.2 26 13.4 27.6 C14 28.4 14.8 29 15.8 29 H14 C11.6 29 10.6 28 10 26 Z" fill="#ee5f2e"/>
<path d="M8 1 H15.4 C17.4 1 18 2 17.4 4 L12.2 19 C11.6 20.6 10.8 21 9.4 21 H4 C1.8 21 0.9 19.6 1.4 17.4 L5 4 C5.6 2 6.4 1 8 1 Z" fill="url(#cpa)"/>
<path d="M22.8 9 H28 C30.2 9 31 10.4 30.4 12.6 L26.8 25.8 C26.2 28 25.2 29 23 29 H15.8 C14.2 29 13.6 28 14.2 26.4 L19.2 11.6 C19.8 9.8 20.8 9 22.8 9 Z" fill="url(#cpb)"/></svg>
<span class="t" style="left:1528.30px;top:120.20px;height:16px;line-height:16px;font-size:12.4px;color:#242424;">Copilot</span>
<svg style="left:1616px;top:89px;" width="28" height="29" viewBox="0 0 28 29"><path d="M9 22.4 H2.6 Q1 22.4 1 20.8 V2.6 Q1 1 2.6 1 H11 Q12 1 12.6 1.6 L17 6 Q17.6 6.6 17.6 7.6 V14" fill="none" stroke="#2e6be6" stroke-width="1.2" stroke-linejoin="round"/><path d="M5.2 13.6 C7.6 11.6 9.2 8.2 8.8 6.2 C8.5 5 7.4 5.2 7.4 6.4 C7.4 8.6 10 12 13 12.8 C14.2 13 14.2 11.8 13 11.8 C10.6 11.8 7 12.6 5.2 13.6 Z" fill="none" stroke="#2e6be6" stroke-width=".9"/><g transform="translate(18.6 20.6) rotate(-45)" fill="none" stroke="#2e6be6" stroke-width="1.4"><rect x="-8.4" y="-2.8" width="9" height="5.6" rx="2.8"/><rect x="-0.6" y="-2.8" width="9" height="5.6" rx="2.8"/></g></svg>
<span class="t" style="left:1592.57px;top:120.20px;height:16px;line-height:16px;font-size:12.4px;color:#242424;transform:scaleX(0.8860);transform-origin:50% 50%;">Create PDF</span>
<span class="t" style="left:1585.56px;top:135.90px;height:16px;line-height:16px;font-size:12.4px;color:#242424;transform:scaleX(0.9297);transform-origin:50% 50%;">and Share link</span>
<svg style="left:1707.4px;top:89px;" width="28" height="29" viewBox="0 0 28 29"><path d="M9 22.4 H2.6 Q1 22.4 1 20.8 V2.6 Q1 1 2.6 1 H11 Q12 1 12.6 1.6 L17 6 Q17.6 6.6 17.6 7.6 V14" fill="none" stroke="#2e6be6" stroke-width="1.2" stroke-linejoin="round"/><path d="M5.2 13.6 C7.6 11.6 9.2 8.2 8.8 6.2 C8.5 5 7.4 5.2 7.4 6.4 C7.4 8.6 10 12 13 12.8 C14.2 13 14.2 11.8 13 11.8 C10.6 11.8 7 12.6 5.2 13.6 Z" fill="none" stroke="#2e6be6" stroke-width=".9"/><rect x="11.6" y="17.4" width="14.4" height="10.4" rx="1.2" fill="#fff" stroke="#2e6be6" stroke-width="1.2"/><path d="M12 18.4 L18.8 23.6 L25.6 18.4" fill="none" stroke="#2e6be6" stroke-width="1.1"/></svg>
<span class="t" style="left:1670.60px;top:120.20px;height:16px;line-height:16px;font-size:12.4px;color:#242424;transform:scaleX(0.9018);transform-origin:50% 50%;">Create PDF and</span>
<span class="t" style="left:1666.42px;top:135.90px;height:16px;line-height:16px;font-size:12.4px;color:#242424;transform:scaleX(0.9405);transform-origin:50% 50%;">Share via Outlook</span>
<svg style="left:1804px;top:84px;" width="34" height="34" viewBox="0 0 34 34"><circle cx="16.8" cy="16.8" r="16" fill="#2ca01c"/><path d="M15 10 V25 M15 12.4 H11.8 A4.6 4.6 0 0 0 11.8 21.6 H15" fill="none" stroke="#fff" stroke-width="2.6"/><path d="M19 8.4 V23.4 M19 12.4 H22.2 A4.6 4.6 0 0 1 22.2 21.6 H19" fill="none" stroke="#fff" stroke-width="2.6"/></svg>
<span class="t" style="left:1785.74px;top:120.20px;height:16px;line-height:16px;font-size:12.4px;color:#242424;transform:scaleX(0.8987);transform-origin:50% 50%;">Spreadsheet</span>
<span class="t" style="left:1807.52px;top:135.90px;height:16px;line-height:16px;font-size:12.4px;color:#242424;transform:scaleX(0.8706);transform-origin:50% 50%;">Sync</span>
<span class="t" style="left:1772.38px;top:161.20px;height:15px;line-height:15px;font-size:11.9px;color:#242424;transform:scaleX(0.9203);transform-origin:50% 50%;">Spreadsheet Sync</span>
<svg style="left:19px;top:185px;" width="17" height="17" viewBox="0 0 17 17"><circle cx="8.5" cy="8.5" r="7.3" fill="none" stroke="#0f6cbd" stroke-width="1.2"/><rect x="7.8" y="7.4" width="1.5" height="5" fill="#0f6cbd"/><circle cx="8.55" cy="5.2" r="1" fill="#0f6cbd"/></svg>
<span class="t" style="left:44.00px;top:185.40px;height:16px;line-height:16px;font-size:12.3px;color:#1a1a1a;transform:scaleX(0.9045);transform-origin:0 50%;">SLOW WORKBOOK?</span>
<span class="t" style="left:163.10px;top:185.40px;height:16px;line-height:16px;font-size:12.3px;color:#1a1a1a;transform:scaleX(0.9792);transform-origin:0 50%;">97% of your workbook has unused formatting and metadata that can be optimized to improve performance.</span>
<div style="left:744px;top:181px;width:124px;height:25px;background:#fff;border:1px solid #6e6e6e;border-radius:4px;"></div>
<span class="t" style="left:753.50px;top:185.50px;height:16px;line-height:16px;font-size:12.4px;color:#242424;transform:scaleX(0.9463);transform-origin:0 50%;">Check Performance</span>
<svg style="left:1890px;top:187px;" width="12" height="12" viewBox="0 0 12 12"><path d="M2 2 L10 10 M10 2 L2 10" stroke="#222" stroke-width="1.1"/></svg>
<div style="left:9px;top:216px;width:100px;height:25.5px;background:#fff;border:1px solid #dcdcdc;border-bottom-color:#cdcdcd;border-radius:4px;"></div>
<span class="t" style="left:15.50px;top:221.60px;height:16px;line-height:16px;font-size:12.3px;color:#242424;transform:scaleX(0.9595);transform-origin:0 50%;">K95</span>
<svg style="left:92px;top:225px;" width="12" height="9" viewBox="0 0 12 9"><path d="M1.6 1.8 L6 6.4 L10.4 1.8" fill="none" stroke="#333" stroke-width="1.2" stroke-linecap="round" stroke-linejoin="round"/></svg>
<div style="left:119px;top:224px;width:2px;height:2px;background:#444;border-radius:1px;"></div>
<div style="left:119px;top:228px;width:2px;height:2px;background:#444;border-radius:1px;"></div>
<div style="left:119px;top:232px;width:2px;height:2px;background:#444;border-radius:1px;"></div>
<div style="left:131px;top:216px;width:84px;height:25.5px;background:#fff;border:1px solid #dcdcdc;border-bottom-color:#cdcdcd;border-radius:4px;"></div>
<svg style="left:137px;top:223px;" width="12" height="12" viewBox="0 0 12 12"><path d="M1 1 L11 11 M11 1 L1 11" stroke="#bcbcbc" stroke-width="1.1"/></svg>
<svg style="left:158px;top:223px;" width="16" height="12" viewBox="0 0 16 12"><path d="M1 6.6 L5.4 10.8 L15 1.2" fill="none" stroke="#bcbcbc" stroke-width="1.1"/></svg>
<span class="t" style="left:184.00px;top:218.40px;height:20px;line-height:20px;font-size:15px;color:#333;font-style:italic;font-family:'Liberation Serif',serif;transform:scaleX(1.5358);transform-origin:0 50%;">f</span>
<span class="t" style="left:190.00px;top:221.60px;height:16px;line-height:16px;font-size:12px;color:#333;font-style:italic;font-family:'Liberation Serif',serif;transform:scaleX(1.3143);transform-origin:0 50%;">x</span>
<svg style="left:203px;top:225px;" width="12" height="9" viewBox="0 0 12 9"><path d="M1.6 1.8 L6 6.2 L10.4 1.8" fill="none" stroke="#777" stroke-width="1.1" stroke-linecap="round" stroke-linejoin="round"/></svg>
<div style="left:221px;top:216px;width:1691px;height:25.5px;background:#fff;border:1px solid #dcdcdc;border-bottom-color:#cdcdcd;border-radius:4px;"></div>
<svg style="left:1896px;top:223px;" width="12" height="9" viewBox="0 0 12 9"><path d="M1.6 1.8 L6 6.4 L10.4 1.8" fill="none" stroke="#333" stroke-width="1.2" stroke-linecap="round" stroke-linejoin="round"/></svg>
<div style="left:0px;top:978px;width:1920px;height:32px;background:#f0f0f0;"></div>
<div style="left:0px;top:977.5px;width:1898px;height:1px;background:#d6d6d6;"></div>
<svg style="left:27px;top:988px;" width="10" height="12" viewBox="0 0 10 12"><path d="M7.4 1.2 L2.2 6 L7.4 10.8" fill="none" stroke="#a6a6a6" stroke-width="1.2" stroke-linecap="round" stroke-linejoin="round"/></svg>
<svg style="left:59px;top:988px;" width="10" height="12" viewBox="0 0 10 12"><path d="M2.6 1.2 L7.8 6 L2.6 10.8" fill="none" stroke="#7a7a7a" stroke-width="1.2" stroke-linecap="round" stroke-linejoin="round"/></svg>
<div style="left:116px;top:978px;width:119px;height:28.5px;background:#ffffff;border-radius:0 0 6px 6px;box-shadow:0 0.5px 2px rgba(0,0,0,.22);"></div>
<div style="left:116px;top:977px;width:119px;height:3px;background:#ffffff;"></div>
<span class="t" style="left:124.20px;top:983.30px;height:17px;line-height:17px;font-size:13.3px;color:#1f1f1f;transform:scaleX(1.0336);transform-origin:0 50%;text-shadow:0.35px 0 0 #1f1f1f;">CompOne (U4F)</span>
<div style="left:124px;top:1001px;width:102px;height:2px;background:#107c41;border-radius:1px;"></div>
<span class="t" style="left:252.50px;top:985.80px;height:17px;line-height:17px;font-size:13.2px;color:#303030;transform:scaleX(0.9766);transform-origin:0 50%;">FDI (NR2-TXU)</span>
<span class="t" style="left:371.80px;top:985.80px;height:17px;line-height:17px;font-size:13.2px;color:#303030;transform:scaleX(0.9942);transform-origin:0 50%;">HAA (6Y7)</span>
<span class="t" style="left:461.00px;top:985.80px;height:17px;line-height:17px;font-size:13.2px;color:#303030;transform:scaleX(0.9428);transform-origin:0 50%;">IME (FJV)</span>
<span class="t" style="left:545.60px;top:985.80px;height:17px;line-height:17px;font-size:13.2px;color:#303030;transform:scaleX(0.9702);transform-origin:0 50%;">MAI (RPC)</span>
<span class="t" style="left:635.60px;top:985.80px;height:17px;line-height:17px;font-size:13.2px;color:#303030;transform:scaleX(0.9450);transform-origin:0 50%;">MAI (RES)</span>
<span class="t" style="left:724.50px;top:985.80px;height:17px;line-height:17px;font-size:13.2px;color:#303030;transform:scaleX(1.0310);transform-origin:0 50%;">Rizikon (M9H)</span>
<span class="t" style="left:839.20px;top:985.80px;height:17px;line-height:17px;font-size:13.2px;color:#303030;transform:scaleX(0.9774);transform-origin:0 50%;">SCA (M9F)</span>
<span class="t" style="left:932.20px;top:985.80px;height:17px;line-height:17px;font-size:13.2px;color:#303030;transform:scaleX(0.9805);transform-origin:0 50%;">Startech (PCT)</span>
<span class="t" style="left:1183.00px;top:985.80px;height:17px;line-height:17px;font-size:13.2px;color:#303030;transform:scaleX(1.0372);transform-origin:0 50%;">Emily Dawood</span>
<span class="t" style="left:1300.00px;top:985.80px;height:17px;line-height:17px;font-size:13.2px;color:#303030;">Larry Chessler</span>
<span class="t" style="left:1410.00px;top:985.80px;height:17px;line-height:17px;font-size:13.2px;color:#303030;transform:scaleX(0.9919);transform-origin:0 50%;">Sheet1</span>
<div style="left:238.5px;top:985.5px;width:1px;height:17px;background:#c9c9c9;"></div>
<div style="left:356px;top:985.5px;width:1px;height:17px;background:#c9c9c9;"></div>
<div style="left:447.5px;top:985.5px;width:1px;height:17px;background:#c9c9c9;"></div>
<div style="left:531px;top:985.5px;width:1px;height:17px;background:#c9c9c9;"></div>
<div style="left:621.5px;top:985.5px;width:1px;height:17px;background:#c9c9c9;"></div>
<div style="left:709.5px;top:985.5px;width:1px;height:17px;background:#c9c9c9;"></div>
<div style="left:825.5px;top:985.5px;width:1px;height:17px;background:#c9c9c9;"></div>
<div style="left:917.5px;top:985.5px;width:1px;height:17px;background:#c9c9c9;"></div>
<div style="left:1032.5px;top:985.5px;width:1px;height:17px;background:#c9c9c9;"></div>
<div style="left:1170px;top:985.5px;width:1px;height:17px;background:#c9c9c9;"></div>
<div style="left:1285px;top:985.5px;width:1px;height:17px;background:#c9c9c9;"></div>
<div style="left:1398.5px;top:985.5px;width:1px;height:17px;background:#c9c9c9;"></div>
<div style="left:1465px;top:985.5px;width:1px;height:17px;background:#c9c9c9;"></div>
<div style="left:1037px;top:982px;width:128px;height:24px;background:#a4000f;border-radius:4px;"></div>
<span class="t" style="left:1047.30px;top:985.80px;height:17px;line-height:17px;font-size:13.2px;color:#ffffff;transform:scaleX(1.0339);transform-origin:0 50%;">Benefit Premiums</span>
<svg style="left:1506px;top:988px;" width="12" height="12" viewBox="0 0 12 12"><path d="M6 0.8 V11.2 M0.8 6 H11.2" stroke="#333" stroke-width="1.1"/></svg>
<div style="left:1634px;top:990px;width:2px;height:2px;background:#333;border-radius:1px;"></div>
<div style="left:1634px;top:994.3px;width:2px;height:2px;background:#333;border-radius:1px;"></div>
<div style="left:1634px;top:998.6px;width:2px;height:2px;background:#333;border-radius:1px;"></div>
<div style="left:1651px;top:985px;width:1247px;height:17px;background:#f5f5f5;border-radius:8.5px;width:247px;"></div>
<div style="left:1680px;top:989px;width:176px;height:9px;background:#757575;border-radius:4.5px;"></div>
<div style="left:1901px;top:249px;width:17px;height:730px;background:#f5f5f5;border-radius:8.5px;"></div>
<div style="left:0px;top:1010px;width:1920px;height:22px;background:#f5f5f5;"></div>
<span class="t" style="left:12.50px;top:1013.80px;height:15px;line-height:15px;font-size:11.8px;color:#3a3a3a;transform:scaleX(0.8942);transform-origin:0 50%;">Ready</span>
<svg style="left:93px;top:1013px;" width="16" height="16" viewBox="0 0 16 16"><circle cx="7" cy="2.6" r="1.6" fill="none" stroke="#333" stroke-width="1"/><path d="M1 5.6 C4 6.6 10 6.6 13 5.6" fill="none" stroke="#333" stroke-width="1.1" stroke-linecap="round"/><path d="M5.2 6.6 V10 L3.2 14.6 M8.8 6.6 V9 M7 10.4 L8 12" fill="none" stroke="#333" stroke-width="1.1" stroke-linecap="round"/><path d="M9.4 9.6 L14.6 14.8 M14.6 9.6 L9.4 14.8" stroke="#333" stroke-width="1.1" stroke-linecap="round"/></svg>
<span class="t" style="left:112.50px;top:1013.80px;height:15px;line-height:15px;font-size:11.8px;color:#262626;font-weight:bold;transform:scaleX(0.8865);transform-origin:0 50%;">Accessibility: Investigate</span>
<div style="left:1620px;top:1011px;width:40px;height:21px;background:#dfdfdf;"></div>
<svg style="left:1633px;top:1014px;" width="14" height="13" viewBox="0 0 14 13"><rect x="0.6" y="0.6" width="12.4" height="11.6" fill="none" stroke="#222" stroke-width="1.2"/><path d="M4.7 0.6 V12.2 M8.9 0.6 V12.2 M0.6 4.5 H13 M0.6 8.3 H13" stroke="#222" stroke-width="1.1"/></svg>
<svg style="left:1673px;top:1014px;" width="15" height="13" viewBox="0 0 15 13"><rect x="0.6" y="0.6" width="13.2" height="11.6" fill="none" stroke="#222" stroke-width="1.2"/><rect x="3.4" y="3.2" width="7.6" height="6.4" fill="none" stroke="#222" stroke-width="1"/><path d="M5.2 5.4 H9.2 M5.2 7.4 H9.2" stroke="#222" stroke-width=".9"/></svg>
<svg style="left:1712px;top:1014px;" width="15" height="13" viewBox="0 0 15 13"><rect x="0.6" y="0.6" width="13.2" height="11.6" fill="none" stroke="#222" stroke-width="1.2"/><path d="M4.6 0.6 V6.4 H9.4 V0.6 M0.6 6.4 H4.6" fill="none" stroke="#222" stroke-width="1.1"/></svg>
<div style="left:1746.2px;top:1020px;width:7.6px;height:1.2px;background:#444;"></div>
<div style="left:1759px;top:1021px;width:100px;height:1px;background:#6a6a6a;"></div>
<div style="left:1807.2px;top:1015.8px;width:4.8px;height:11.4px;background:#666;"></div>
<svg style="left:1864px;top:1016.5px;" width="8" height="8" viewBox="0 0 8 8"><path d="M4 0.2 V7.8 M0.2 4 H7.8" stroke="#444" stroke-width="1.1"/></svg>
<span class="t" style="left:1885.80px;top:1013.80px;height:15px;line-height:15px;font-size:11.6px;color:#333;transform:scaleX(0.8763);transform-origin:0 50%;">100%</span>
<div style="left:0px;top:1032px;width:1920px;height:48px;background:#eeeeee;"></div>
<div style="left:0px;top:1032px;width:1920px;height:1px;background:#c6c6c6;"></div>
<svg style="left:20px;top:1044px;" width="25" height="25" viewBox="0 0 25 25"><circle cx="10" cy="10.6" r="8" fill="#f7a823"/><path d="M4.6 22.6 C1 22.6 0.8 17.8 4.4 17.4 C5 13.6 10.4 13 12 16 C15 14.4 18.2 16.4 18 18.6 C21.4 18.4 21.4 22.6 18.4 22.6 Z" fill="#dfe9f8" stroke="#a9c4ee" stroke-width=".8"/></svg>
<div style="left:30px;top:1038.3px;width:16px;height:16px;background:#c42b1c;border-radius:8px;"></div>
<span class="t" style="left:35.00px;top:1038.70px;height:15px;line-height:15px;font-size:11.5px;color:#fff;">1</span>
<span class="t" style="left:50.80px;top:1040.30px;height:16px;line-height:16px;font-size:12.2px;color:#1f1f1f;transform:scaleX(0.8880);transform-origin:0 50%;">36°F</span>
<span class="t" style="left:50.80px;top:1056.50px;height:16px;line-height:16px;font-size:12.2px;color:#5c5c5c;transform:scaleX(0.9563);transform-origin:0 50%;">Partly sunny</span>
<svg style="left:550px;top:1045px;" width="24" height="24" viewBox="0 0 24 24"><defs><linearGradient id="wg" x1="0" y1="0" x2="1" y2="1"><stop offset="0" stop-color="#4cc2f5"/><stop offset="1" stop-color="#0a6fd0"/></linearGradient></defs><rect x="0.8" y="0.4" width="10.8" height="10.8" rx=".8" fill="url(#wg)"/><rect x="12.6" y="0.4" width="10.8" height="10.8" rx=".8" fill="url(#wg)"/><rect x="0.8" y="12.2" width="10.8" height="10.8" rx=".8" fill="url(#wg)"/><rect x="12.6" y="12.2" width="10.8" height="10.8" rx=".8" fill="url(#wg)"/></svg>
<div style="left:587.5px;top:1040.5px;width:219px;height:31px;background:#fafafa;border:1px solid #dedede;border-bottom-color:#cfcfcf;border-radius:15.5px;"></div>
<svg style="left:598px;top:1048px;" width="17" height="17" viewBox="0 0 17 17"><circle cx="7" cy="7" r="5.2" fill="none" stroke="#222" stroke-width="1.5"/><path d="M10.8 10.8 L15 15" stroke="#222" stroke-width="1.6" stroke-linecap="round"/></svg>
<span class="t" style="left:624.50px;top:1047.70px;height:17px;line-height:17px;font-size:13.4px;color:#5a5a5a;transform:scaleX(0.9421);transform-origin:0 50%;">Search</span>
<svg style="left:818px;top:1044px;" width="26" height="24" viewBox="0 0 26 24"><rect x="7.6" y="1" width="17" height="15" rx="1.2" fill="#f4f4f4" stroke="#dadada" stroke-width=".8"/><rect x="0.8" y="6.6" width="17.6" height="16" rx="1.4" fill="#2a2a2a"/><rect x="7.6" y="6.6" width="10.8" height="9.4" fill="#c9c9c9"/></svg>
<svg style="left:863px;top:1044px;" width="25" height="24" viewBox="0 0 25 24"><path d="M0.8 2.2 C0.8 1.4 1.4 1 2 1 H8.6 L10.8 3.2 H22.6 C23.4 3.2 24 3.8 24 4.6 V8 H0.8 Z" fill="#e8a317"/><rect x="0.8" y="4.8" width="23.2" height="18" rx="1.4" fill="#ffd23d"/><path d="M0.8 14 H24 V21.4 C24 22.2 23.4 22.8 22.6 22.8 H2.2 C1.4 22.8 0.8 22.2 0.8 21.4 Z" fill="#fcc419"/><rect x="6.8" y="14.6" width="11.4" height="6.6" rx="1.6" fill="#1681d8"/><rect x="8.2" y="18" width="8.6" height="3.2" fill="#0d5fb4"/></svg>
<div style="left:872px;top:1072.2px;width:6px;height:2.6px;background:#8c8c8c;border-radius:1.3px;"></div>
<svg style="left:906px;top:1043px;" width="26" height="26" viewBox="0 0 26 26"><defs><linearGradient id="eg" x1="0" y1="0" x2="1" y2="1"><stop offset="0" stop-color="#35c1f1"/><stop offset=".6" stop-color="#1c9ad6"/><stop offset="1" stop-color="#0c59a4"/></linearGradient><linearGradient id="eg2" x1="0" y1="0" x2="1" y2="0"><stop offset="0" stop-color="#2bc4d8"/><stop offset="1" stop-color="#6adf6a"/></linearGradient></defs><circle cx="13" cy="13" r="12" fill="url(#eg)"/><path d="M1.4 11 C3 3 12 -1 19.6 3 C24.6 6 26 11.6 23.6 15 C21.6 17.6 16.6 17.6 15.6 15 C17.6 12.6 15 8.6 11 9 C6 9.4 3.6 14 4.6 18.6 C2 16.6 1 14 1.4 11 Z" fill="url(#eg2)"/><path d="M11 9 C7.4 10 6.6 15 9 19 C11.6 23 17 24.6 21.6 21 C17.6 22.6 12.6 20 12.6 15.6 C12.6 13.6 13.6 12.6 14.6 12 C14 10 12.6 8.8 11 9 Z" fill="#0c4f94"/><rect x="1" y="15.6" width="11.4" height="9" rx="1.2" fill="#b5651d"/><rect x="1" y="15.6" width="11.4" height="4" rx="1" fill="#d9822b"/><rect x="4.6" y="14" width="4.2" height="2.4" rx=".8" fill="none" stroke="#8a4a12" stroke-width=".9"/><rect x="5.8" y="18.6" width="1.8" height="2" fill="#f6d28a"/></svg>
<div style="left:915.8px;top:1072.2px;width:6px;height:2.6px;background:#8c8c8c;border-radius:1.3px;"></div>
<svg style="left:950px;top:1044px;" width="26" height="25" viewBox="0 0 26 25"><circle cx="17.6" cy="6.4" r="3.4" fill="#7b83eb"/><circle cx="9.6" cy="5.4" r="4.2" fill="#5b63d3"/><rect x="12.6" y="10.4" width="10.6" height="11" rx="3" fill="#7b83eb"/><path d="M3.6 10.4 H16.2 V18 C16.2 22 13.4 24.2 9.8 24.2 C6.2 24.2 3.6 22 3.6 18 Z" fill="#5b63d3"/><rect x="0.6" y="10.6" width="10.6" height="10.6" rx="1.4" fill="#4b53bc"/><path d="M3.4 13.4 H8.4 M5.9 13.4 V18.8" stroke="#fff" stroke-width="1.5"/></svg>
<div style="left:959.5px;top:1072.2px;width:6px;height:2.6px;background:#8c8c8c;border-radius:1.3px;"></div>
<div style="left:964px;top:1039px;width:16px;height:16px;background:#c42b1c;border-radius:8px;"></div>
<span class="t" style="left:969.00px;top:1039.40px;height:15px;line-height:15px;font-size:11.5px;color:#fff;">1</span>
<svg style="left:995px;top:1044px;" width="25" height="25" viewBox="0 0 25 25"><path d="M2 1.6 L19.6 3 L18.6 17 L3 15.6 Z" fill="#1d4fc0"/><path d="M3.6 3.2 L18 4.4 L17.2 15.4 L4.4 14.2 Z" fill="#4a8af0"/><path d="M3.6 3.2 L12 3.9 L7 14.4 L4.4 14.2 Z" fill="#8fc0ff" opacity=".8"/><path d="M7.6 16 L13.6 16.6 L14 19.6 H7 Z" fill="#b8bcc4"/><rect x="4.6" y="19.4" width="12" height="2" rx="1" fill="#d2d5da"/><circle cx="18.4" cy="18.4" r="5.6" fill="#e8eaec" stroke="#9a9ea6" stroke-width=".8"/><path d="M15.6 19.4 L17.6 17.4 L15.6 15.6 M21.2 17.4 L19.2 19.4 L21.2 21.2" fill="none" stroke="#2e9c3e" stroke-width="1.3"/></svg>
<svg style="left:1038px;top:1044px;" width="26" height="26" viewBox="0 0 26 26"><circle cx="13" cy="12.6" r="11.4" fill="#fff" stroke="#1267c6" stroke-width="1.8"/><path d="M19.4 8.4 A7.4 7.4 0 1 0 19.4 16.8" fill="none" stroke="#1267c6" stroke-width="3"/><path d="M15.6 12.6 H25" stroke="#1267c6" stroke-width="2.2"/></svg>
<svg style="left:1083px;top:1044px;" width="25" height="25" viewBox="0 0 25 25"><circle cx="12" cy="12" r="11.6" fill="#fff"/><path d="M12 0.4 A11.6 11.6 0 0 1 22.05 6.2 H12 A5.8 5.8 0 0 0 6.98 9.1 L1.95 6.2 A11.6 11.6 0 0 1 12 0.4 Z" fill="#ea4335"/><path d="M22.05 6.2 A11.6 11.6 0 0 1 12 23.6 L17.02 14.9 A5.8 5.8 0 0 0 17.02 9.1 L12 6.2 Z" fill="#fbbc04"/><path d="M1.95 6.2 L6.98 14.9 A5.8 5.8 0 0 0 12 17.8 L17.02 14.9 L12 23.6 A11.6 11.6 0 0 1 1.95 6.2 Z" fill="#34a853"/><circle cx="12" cy="12" r="5.6" fill="#fff"/><circle cx="12" cy="12" r="4.5" fill="#4285f4"/></svg>
<div style="left:1092px;top:1072.2px;width:6px;height:2.6px;background:#8c8c8c;border-radius:1.3px;"></div>
<svg style="left:1126px;top:1044px;" width="26" height="24" viewBox="0 0 26 24"><path d="M5 8.6 L14.6 1.4 C15.4 0.8 16.4 0.8 17.2 1.4 L24.4 7 C25 7.6 25.4 8.2 25.4 9 V19 C25.4 20.6 24.2 21.6 22.8 21.6 H7.4 C6 21.6 5 20.6 5 19 Z" fill="#1490df"/><path d="M8 6.4 L19 3.2 L23.6 9.4 L12 14 Z" fill="#0f5fb8"/><path d="M5 10 L25.4 19.6 C25 20.8 24 21.6 22.8 21.6 H7.4 C6 21.6 5 20.6 5 19 Z" fill="#35b8f1"/><path d="M25.4 9.4 L9 21.6 H22.8 C24.2 21.6 25.4 20.6 25.4 19 Z" fill="#50d0f8" opacity=".85"/><rect x="0.6" y="10" width="11.6" height="11.6" rx="1.6" fill="#0f6cbd"/><circle cx="6.4" cy="15.8" r="3.1" fill="none" stroke="#fff" stroke-width="1.6"/></svg>
<div style="left:1135.5px;top:1072.2px;width:6px;height:2.6px;background:#8c8c8c;border-radius:1.3px;"></div>
<svg style="left:1170px;top:1044px;" width="24" height="24" viewBox="0 0 24 24"><path d="M6 2.6 C6 1.4 6.8 0.6 8 0.6 H21 C22.2 0.6 23 1.4 23 2.6 V20 C23 21.2 22.2 22 21 22 H8 C6.8 22 6 21.2 6 20 Z" fill="#ca64ea"/><path d="M14 0.6 H21 C22.2 0.6 23 1.4 23 2.6 V7.6 H14 Z" fill="#e5a0f5"/><path d="M17 7.6 H23 V14.6 H17 Z" fill="#b140d8"/><path d="M6 10 H17 V22 H8 C6.8 22 6 21.2 6 20 Z" fill="#9a2fc0" opacity=".7"/><rect x="0.4" y="9.6" width="12" height="12" rx="1.6" fill="#7719aa"/><path d="M3.8 18.6 V12.6 L8.8 18.6 V12.6" fill="none" stroke="#fff" stroke-width="1.5"/></svg>
<div style="left:1179px;top:1072.2px;width:6px;height:2.6px;background:#8c8c8c;border-radius:1.3px;"></div>
<svg style="left:1216px;top:1045px;" width="23" height="23" viewBox="0 0 23 23"><rect x="0.6" y="0.8" width="21.4" height="21.4" rx="5.4" fill="#3b1a8c"/><rect x="0.6" y="0.8" width="21.4" height="10" rx="5" fill="#4a22a8"/><circle cx="10.6" cy="11.2" r="5" fill="none" stroke="#fff" stroke-width="2.6"/><path d="M12.6 13.4 L17.6 18" stroke="#fff" stroke-width="2.6" stroke-linecap="round"/><circle cx="5" cy="5" r=".8" fill="#e6d9ff"/><circle cx="17.4" cy="5.4" r=".9" fill="#e6d9ff"/><circle cx="5.6" cy="18" r=".7" fill="#e6d9ff"/></svg>
<div style="left:1224px;top:1072.2px;width:6px;height:2.6px;background:#8c8c8c;border-radius:1.3px;"></div>
<div style="left:1252px;top:1037px;width:38px;height:38.5px;background:#fafafa;border:1px solid #e4e4e4;border-radius:5px;"></div>
<svg style="left:1258px;top:1044px;" width="24" height="24" viewBox="0 0 24 24"><rect x="6.6" y="0.6" width="15.6" height="22" rx="2.4" fill="#21a366"/><path d="M6.6 3 C6.6 1.6 7.6 0.6 9 0.6 H14.4 V11.6 H6.6 Z" fill="#33c481"/><path d="M14.4 0.6 H19.8 C21.2 0.6 22.2 1.6 22.2 3 V9 H14.4 Z" fill="#9bdc6e"/><path d="M14.4 9 H22.2 V16 H14.4 Z" fill="#21a366"/><path d="M14.4 16 H22.2 V20.2 C22.2 21.6 21.2 22.6 19.8 22.6 H14.4 Z" fill="#107c41"/><path d="M6.6 11.6 H14.4 V22.6 H9 C7.6 22.6 6.6 21.6 6.6 20.2 Z" fill="#185c37"/><rect x="0.6" y="9.6" width="12.4" height="12.4" rx="1.8" fill="#107c41"/><path d="M4 12.6 L9.6 19.2 M9.6 12.6 L4 19.2" stroke="#fff" stroke-width="1.7"/></svg>
<div style="left:1262.8px;top:1072px;width:16px;height:3px;background:#0067c0;border-radius:1.5px;"></div>
<svg style="left:1305px;top:1044px;" width="20" height="24" viewBox="0 0 20 24"><rect x="0.6" y="0.6" width="18.4" height="22.8" rx="1.6" fill="#5d6a78"/><rect x="2.2" y="2.2" width="15.2" height="4.6" fill="#48c6ee"/><g fill="#d4d9df"><rect x="2.2" y="8.4" width="4" height="3.8"/><rect x="7.8" y="8.4" width="4" height="3.8"/><rect x="13.4" y="8.4" width="4" height="3.8"/><rect x="2.2" y="13.4" width="4" height="3.8"/><rect x="7.8" y="13.4" width="4" height="3.8"/><rect x="2.2" y="18.4" width="4" height="3.8"/><rect x="7.8" y="18.4" width="4" height="3.8"/></g><rect x="13.4" y="13.4" width="4" height="8.8" fill="#0f5ea8"/></svg>
<div style="left:1312px;top:1072.2px;width:6px;height:2.6px;background:#8c8c8c;border-radius:1.3px;"></div>
<svg style="left:1348px;top:1045px;" width="23" height="23" viewBox="0 0 23 23"><rect x="0.4" y="0.4" width="21.6" height="21.6" rx="3.6" fill="#b30b00"/><path d="M5 16.6 C8.6 13.6 11 8.6 10.6 5.6 C10.3 3.8 8.6 4.2 8.8 6 C9.2 9.4 12.8 14 17 14.8 C18.8 15 18.6 13.2 17 13.2 C13.6 13.2 8 14.8 5 16.6 Z" fill="none" stroke="#fff" stroke-width="1.5" stroke-linejoin="round"/></svg>
<div style="left:1356px;top:1072.2px;width:6px;height:2.6px;background:#8c8c8c;border-radius:1.3px;"></div>
<svg style="left:1699px;top:1051px;" width="13" height="10" viewBox="0 0 13 10"><path d="M1.2 8 L6.4 2.4 L11.6 8" fill="none" stroke="#222" stroke-width="1.4" stroke-linecap="round" stroke-linejoin="round"/></svg>
<svg style="left:1730px;top:1047px;" width="14" height="18" viewBox="0 0 14 18"><rect x="4.4" y="1" width="5.2" height="9.6" rx="2.6" fill="none" stroke="#0f5fc4" stroke-width="1.3"/><path d="M1.6 8 C1.6 15 12.4 15 12.4 8 M7 13.4 V16.8" fill="none" stroke="#0f5fc4" stroke-width="1.3" stroke-linecap="round"/></svg>
<svg style="left:1760px;top:1048px;" width="18" height="15" viewBox="0 0 18 15"><path d="M1 5.6 C5.6 0.6 12.4 0.6 17 5.6" fill="none" stroke="#222" stroke-width="1.2" stroke-linecap="round"/><path d="M3.6 8.4 C6.8 5 11.2 5 14.4 8.4" fill="none" stroke="#222" stroke-width="1.2" stroke-linecap="round"/><path d="M6.2 11 C7.8 9.2 10.2 9.2 11.8 11" fill="none" stroke="#222" stroke-width="1.2" stroke-linecap="round"/><circle cx="9" cy="13.2" r="1.1" fill="#222"/></svg>
<svg style="left:1784px;top:1048px;" width="18" height="15" viewBox="0 0 18 15"><path d="M1 5.2 H3.8 L7.4 1.8 V13.2 L3.8 9.8 H1 Z" fill="none" stroke="#222" stroke-width="1.1" stroke-linejoin="round"/><path d="M9.6 5 C10.8 6.4 10.8 8.6 9.6 10" fill="none" stroke="#222" stroke-width="1.1" stroke-linecap="round"/><path d="M11.8 3.2 C14 5.6 14 9.4 11.8 11.8" fill="none" stroke="#222" stroke-width="1.1" stroke-linecap="round"/><path d="M14 1.4 C17.2 5 17.2 10 14 13.6" fill="none" stroke="#222" stroke-width="1.1" stroke-linecap="round"/></svg>
<svg style="left:1808px;top:1047px;" width="22" height="15" viewBox="0 0 22 15"><rect x="1" y="4.2" width="17.6" height="9.6" rx="2.4" fill="none" stroke="#222" stroke-width="1.1"/><rect x="2.6" y="5.8" width="14.4" height="6.4" rx="1.2" fill="#107c10"/><path d="M19.6 7 C20.8 7.4 20.8 10.6 19.6 11" fill="none" stroke="#222" stroke-width="1.1"/><path d="M10.8 0.2 L7.2 6.6 H9.8 L8.8 10.4 L12.8 4.2 H10.2 Z" fill="#1a1a1a" stroke="#eeeeee" stroke-width=".9" paint-order="stroke"/></svg>
<span class="t" style="left:1848.28px;top:1040.80px;height:16px;line-height:16px;font-size:12.2px;color:#1f1f1f;transform:scaleX(0.9422);transform-origin:100% 50%;">12:18 PM</span>
<span class="t" style="left:1846.22px;top:1056.80px;height:16px;line-height:16px;font-size:12.2px;color:#1f1f1f;">3/24/2026</span>
</body></html>
